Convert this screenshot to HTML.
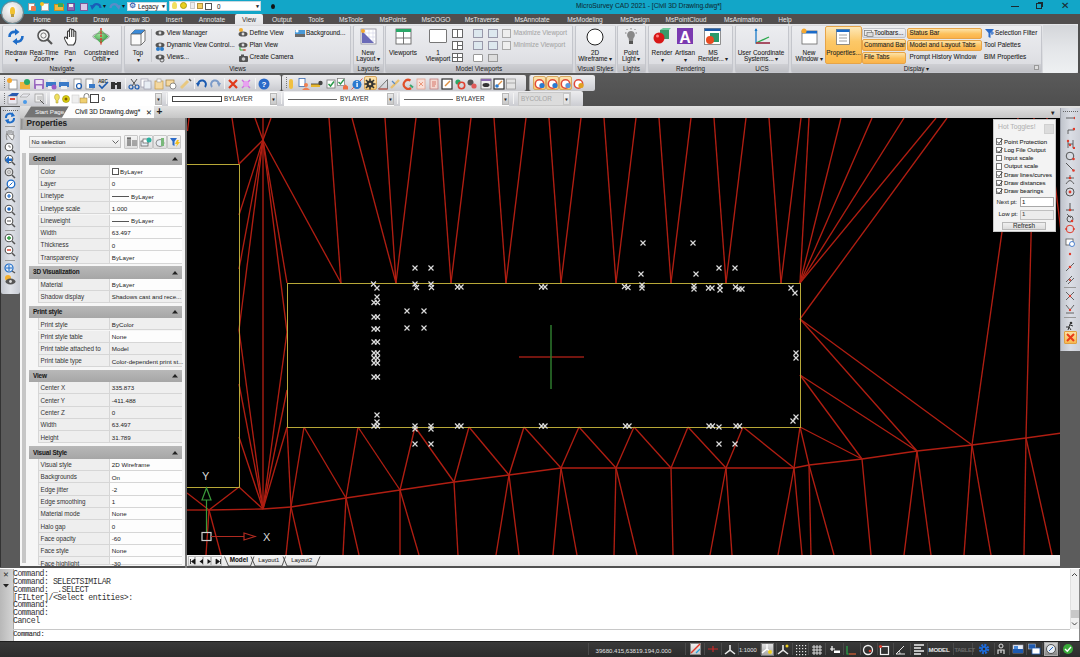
<!DOCTYPE html>
<html><head><meta charset="utf-8">
<style>
*{margin:0;padding:0;box-sizing:border-box}
html,body{width:1080px;height:657px;overflow:hidden;background:#555;font-family:"Liberation Sans",sans-serif;color:#222}
.a{position:absolute}
.t{position:absolute;white-space:nowrap;line-height:1;-webkit-text-stroke:0.07px currentColor}
#title{left:0;top:0;width:1080px;height:14px;background:#12a6c8}
#menubar{left:0;top:14px;width:1080px;height:10px;background:#514e4e}
#ribbon{left:0;top:24px;width:1080px;height:49px;background:linear-gradient(#e4e5e8,#d6d7db)}
#darkband{left:0;top:73px;width:1080px;height:34px;background:linear-gradient(#5a5a5a,#4e4e4e)}
#tabrow{left:0;top:106px;width:1080px;height:12px;background:linear-gradient(#e2e2e2,#c6c6c6)}
#leftbar{left:0;top:106px;width:20px;height:462px;background:#5a5a5a}
#props{left:20px;top:118px;width:166px;height:448px;background:#efefef}
#draw{left:187px;top:118px;width:873px;height:437px;background:#000}
#layouttabs{left:187px;top:555px;width:873px;height:12px;background:#e8e8e8}
#rightbar{left:1060px;top:108px;width:20px;height:460px;background:#5c5c5c}
#cmd{left:0;top:568px;width:1080px;height:73px;background:#fff}
#status{left:0;top:641px;width:1080px;height:16px;background:#3b3b3b}
.mi{position:absolute;top:17.3px;font-size:6.6px;color:#e6e6e6;transform:translateX(-50%);white-space:nowrap;line-height:1}
.grp{position:absolute;top:25px;height:48px;border-radius:2px;background:linear-gradient(#ecedf0 0%,#e2e3e7 60%,#d9dade 100%);border:1px solid #c4c6cc;border-top-color:#d8d9dc}
.gl{position:absolute;left:0;right:0;bottom:0;height:8px;background:linear-gradient(#cfd0d4,#bfc0c5);font-size:6.3px;text-align:center;line-height:9.6px;color:#1a1a1a}
.rl{position:absolute;font-size:6.4px;color:#222;white-space:nowrap;line-height:1;transform:translateX(-50%);text-align:center}
.sl{position:absolute;font-size:6.4px;color:#222;white-space:nowrap;line-height:1}
.dis{color:#a8a8a8}
.ob{position:absolute;background:linear-gradient(#fde3a8,#fcc05a 55%,#fbb24a);border:1px solid #e6a448;border-radius:2px}
</style></head><body>
<div id="title" class="a"></div>
<div id="menubar" class="a"></div>
<!-- app button -->
<div class="a" style="left:2px;top:2px;width:21px;height:21px;border-radius:50%;background:radial-gradient(circle at 45% 35%,#ffffff,#d8d8d8 60%,#9a9a9a);box-shadow:0 0 0 1px #6d8a94"></div>
<div class="a" style="left:10px;top:7px;width:5px;height:8px;border-radius:50% 50% 40% 40%;background:#f2c230"></div>
<div class="a" style="left:11px;top:14px;width:3px;height:3px;background:#b89a40"></div>
<!-- QAT icons -->
<div class="a" style="left:28px;top:3px;width:7px;height:8px;background:#fafafa;border:1px solid #999"></div>
<div class="a" style="left:31px;top:6px;width:5px;height:5px;background:#e8764a;border-radius:1px"></div>
<div class="a" style="left:41px;top:3px;width:8px;height:8px;background:#fafafa;border:1px solid #aaa"></div>
<div class="a" style="left:40px;top:2px;width:4px;height:4px;background:#f4c020;border-radius:50%"></div>
<div class="a" style="left:54px;top:4px;width:10px;height:7px;background:#f0b840;border:1px solid #c89020"></div>
<div class="a" style="left:58px;top:3px;width:5px;height:4px;background:#3aaa5a"></div>
<div class="a" style="left:67px;top:3px;width:8px;height:8px;background:#8c6cb4;border:1px solid #6a4a94"></div>
<div class="a" style="left:69px;top:4px;width:4px;height:3px;background:#eee"></div>
<div class="a" style="left:80px;top:3px;width:8px;height:8px;background:#d8c8e8;border:1px solid #7a5a9a"></div>
<svg class="a" style="left:90px;top:2px" width="12" height="10" viewBox="0 0 12 10"><path d="M3 5 C4 1 10 1 10.5 6" stroke="#1a5cb8" stroke-width="2.2" fill="none"/><path d="M0 3 L5.5 3.5 L2 8Z" fill="#1a5cb8"/></svg>
<div class="t" style="left:103px;top:3px;font-size:6px;color:#111">&#x25BE;</div>
<svg class="a" style="left:109px;top:2px" width="12" height="10" viewBox="0 0 12 10"><path d="M9 5 C8 1 2 1 1.5 6" stroke="#5a8cc8" stroke-width="2.2" fill="none"/><path d="M12 3 L6.5 3.5 L10 8Z" fill="#5a8cc8"/></svg>
<div class="t" style="left:122px;top:3px;font-size:6px;color:#111">&#x25BE;</div>
<div class="a" style="left:127px;top:2px;width:40px;height:9px;background:#fff;border:1px solid #c8d8e0"></div>
<div class="t" style="left:129px;top:2px;font-size:8px;color:#1a4ea8">&#x2699;</div>
<div class="t" style="left:138px;top:3.5px;font-size:6.3px;color:#222">Legacy</div>
<div class="t" style="left:161px;top:4px;font-size:5px;color:#222">&#x25BC;</div>
<div class="a" style="left:169px;top:1px;width:92px;height:10px;background:#fff;border:1px solid #c8d8e0"></div>
<div class="a" style="left:172px;top:2px;width:5px;height:7px;border-radius:50% 50% 30% 30%;background:#f2e060"></div>
<div class="a" style="left:180px;top:2px;width:7px;height:7px;border-radius:50%;background:#e8d020;border:1px solid #b0a010"></div>
<div class="a" style="left:190px;top:2px;width:5px;height:7px;background:#eee;border:1px solid #ccc"></div>
<div class="a" style="left:197px;top:3px;width:6px;height:6px;background:#f4d060;border:1px solid #b09040"></div>
<div class="a" style="left:205px;top:3px;width:7px;height:7px;border:1px solid #555;background:#fff"></div>
<div class="t" style="left:217px;top:3.5px;font-size:6.3px;color:#333">0</div>
<div class="t" style="left:255px;top:4px;font-size:5px;color:#222">&#x25BC;</div>
<div class="a" style="left:271px;top:4px;width:4px;height:5px;border-radius:50%;background:#111"></div>
<div class="t" style="left:576px;top:3px;font-size:6.7px;color:#10303a">MicroSurvey CAD 2021 - [Civil 3D Drawing.dwg*]</div>
<div class="a" style="left:1011px;top:6px;width:8px;height:1px;background:#1a2a30"></div>
<div class="a" style="left:1036px;top:3px;width:6px;height:6px;border:1px solid #1a2a30"></div>
<div class="a" style="left:1038px;top:2px;width:5px;height:5px;border-top:1px solid #1a2a30;border-right:1px solid #1a2a30"></div>
<div class="t" style="left:1061px;top:1px;font-size:10px;color:#1a2a30">&#x2715;</div>

<div class="a" style="left:235px;top:14px;width:28px;height:11px;background:linear-gradient(#f2f2f2,#e4e5e8);border-radius:2px 2px 0 0"></div>
<div class="mi" style="left:42px">Home</div>
<div class="mi" style="left:72px">Edit</div>
<div class="mi" style="left:101px">Draw</div>
<div class="mi" style="left:137px">Draw 3D</div>
<div class="mi" style="left:174px">Insert</div>
<div class="mi" style="left:212px">Annotate</div>
<div class="mi" style="left:249px;color:#333">View</div>
<div class="mi" style="left:282px">Output</div>
<div class="mi" style="left:316px">Tools</div>
<div class="mi" style="left:351px">MsTools</div>
<div class="mi" style="left:393px">MsPoints</div>
<div class="mi" style="left:436px">MsCOGO</div>
<div class="mi" style="left:482px">MsTraverse</div>
<div class="mi" style="left:532px">MsAnnotate</div>
<div class="mi" style="left:585px">MsModeling</div>
<div class="mi" style="left:635px">MsDesign</div>
<div class="mi" style="left:686px">MsPointCloud</div>
<div class="mi" style="left:743px">MsAnimation</div>
<div class="mi" style="left:785px">Help</div>

<div id="ribbon" class="a"></div>
<div class="grp" style="left:2px;width:120px"><div class="gl">Navigate</div></div>
<div class="grp" style="left:124px;width:227px"><div class="gl">Views</div></div>
<div class="grp" style="left:353px;width:31px"><div class="gl">Layouts</div></div>
<div class="grp" style="left:385px;width:188px"><div class="gl">Model Viewports</div></div>
<div class="grp" style="left:575px;width:41px"><div class="gl">Visual Styles</div></div>
<div class="grp" style="left:617px;width:29px"><div class="gl">Lights</div></div>
<div class="grp" style="left:648px;width:85px"><div class="gl">Rendering</div></div>
<div class="grp" style="left:735px;width:54px"><div class="gl">UCS</div></div>
<div class="grp" style="left:791px;width:251px"><div class="gl">Display &#x25BE;</div></div>
<div class="a" style="left:1043px;top:25px;width:35px;height:48px;background:linear-gradient(#d4d6da,#e4e6e9 50%,#eef0f2);border-radius:0 3px 3px 0;"></div>
<div class="a" style="left:1078px;top:24px;width:2px;height:49px;background:#505050;"></div>
<svg class="a" style="left:7px;top:28px" width="18" height="18" viewBox="0 0 18 18"><path d="M2.5 9 C2.5 5 5 3.5 9 4" stroke="#1e6cc8" stroke-width="2.6" fill="none"/><path d="M8 0.5 L12.5 4 L8 7.5Z" fill="#1e6cc8"/><path d="M15.5 8 C15.5 12 13 14 9 13.5" stroke="#1e6cc8" stroke-width="2.6" fill="none"/><path d="M10 10 L5.5 13.5 L10 17Z" fill="#1e6cc8"/></svg>
<div class="t" style="left:16px;top:49.68px;font-size:6.4px;transform:translateX(-50%);">Redraw</div>
<div class="t" style="left:16px;top:56.72px;font-size:6px;transform:translateX(-50%);">&#x25BE;</div>
<svg class="a" style="left:36px;top:28px" width="18" height="18" viewBox="0 0 18 18"><circle cx="7.5" cy="7.5" r="5.5" stroke="#555" stroke-width="1.6" fill="#f4f4f4"/><circle cx="7.5" cy="7.5" r="2.6" stroke="#777" stroke-width="1" fill="none"/><path d="M11.5 11.5 L16 16" stroke="#555" stroke-width="2.2"/></svg>
<div class="t" style="left:44px;top:49.68px;font-size:6.4px;transform:translateX(-50%);">Real-Time</div>
<div class="t" style="left:44px;top:56.38px;font-size:6.4px;transform:translateX(-50%);">Zoom&#x2009;&#x25BE;</div>
<svg class="a" style="left:63px;top:27.5px" width="15" height="18" viewBox="0 0 15 18"><path d="M5 17 C3 14 1 11 1.5 9.5 C2 8.5 3.5 9 4.5 11 L4.5 4 C4.5 2.5 6.5 2.5 6.5 4 L6.5 9 L6.5 1.8 C6.5 0.3 8.7 0.3 8.7 1.8 L8.7 9 L8.7 2.5 C8.7 1 10.8 1 10.8 2.5 L10.8 9 L10.8 4 C10.8 2.6 12.8 2.6 12.8 4 L12.8 11.5 C12.8 14.5 11.5 16 10.5 17Z" stroke="#3a3a3a" stroke-width="1.1" fill="#fff"/></svg>
<div class="t" style="left:70px;top:49.68px;font-size:6.4px;transform:translateX(-50%);">Pan</div>
<div class="t" style="left:70px;top:56.72px;font-size:6px;transform:translateX(-50%);">&#x25BE;</div>
<svg class="a" style="left:92px;top:27px" width="18" height="19" viewBox="0 0 18 19"><defs><radialGradient id="og" cx="0.4" cy="0.35" r="0.7"><stop offset="0" stop-color="#9ee09a"/><stop offset="1" stop-color="#2a9a3a"/></radialGradient></defs><path d="M9 2.5 L16.5 9.5 L9 16.5 L1.5 9.5Z" fill="url(#og)"/><ellipse cx="9" cy="9.5" rx="8.2" ry="3.2" stroke="#777" stroke-width="0.6" fill="none"/><path d="M9 1 V18" stroke="#e03a2a" stroke-width="1.5" stroke-dasharray="2.5 0.8"/></svg>
<div class="t" style="left:101px;top:49.68px;font-size:6.4px;transform:translateX(-50%);">Constrained</div>
<div class="t" style="left:101px;top:56.38px;font-size:6.4px;transform:translateX(-50%);">Orbit&#x2009;&#x25BE;</div>
<svg class="a" style="left:129px;top:29px" width="18" height="17" viewBox="0 0 18 17"><path d="M2 5 L6 1 H16 V12 L12 16 H2Z" fill="#fafafa" stroke="#555" stroke-width="0.8"/><path d="M2 5 L6 1 H16 L12 5Z" fill="#3a8ad8"/><path d="M2 5 H12 V16 M12 5 L16 1" stroke="#555" stroke-width="0.8" fill="none"/></svg>
<div class="t" style="left:138px;top:49.68px;font-size:6.4px;transform:translateX(-50%);">Top</div>
<div class="t" style="left:138px;top:56.72px;font-size:6px;transform:translateX(-50%);">&#x25BE;</div>
<div class="a" style="left:151px;top:29px;width:1px;height:33px;background:#c8c9cd;"></div>
<svg class="a" style="left:155px;top:29px" width="10" height="9" viewBox="0 0 10 9"><ellipse cx="5" cy="4" rx="4.5" ry="2.6" fill="#555"/><circle cx="5" cy="4" r="1.4" fill="#ddd"/></svg>
<div class="t" style="left:166.7px;top:29.68px;font-size:6.4px;">View Manager</div>
<svg class="a" style="left:155px;top:41px" width="10" height="10" viewBox="0 0 10 10"><ellipse cx="5" cy="4" rx="4.5" ry="2.6" fill="#555"/><circle cx="5" cy="4" r="1.4" fill="#ddd"/><circle cx="3" cy="8" r="2" fill="#2a7ac8"/><circle cx="7" cy="8" r="2" fill="#2a7ac8"/></svg>
<div class="t" style="left:166.7px;top:41.68px;font-size:6.4px;">Dynamic View Control...</div>
<svg class="a" style="left:155px;top:53px" width="10" height="10" viewBox="0 0 10 10"><ellipse cx="5" cy="4" rx="4.5" ry="2.6" fill="#555"/><circle cx="5" cy="4" r="1.4" fill="#ddd"/><circle cx="7" cy="7" r="2" stroke="#444" fill="none" stroke-width="0.8"/></svg>
<div class="t" style="left:166.7px;top:54.18px;font-size:6.4px;">Views...</div>
<svg class="a" style="left:238px;top:28px" width="10" height="10" viewBox="0 0 10 10"><circle cx="3" cy="2" r="2" fill="#f4b030"/><ellipse cx="5" cy="6" rx="4.5" ry="2.6" fill="#555"/><circle cx="5" cy="6" r="1.4" fill="#ddd"/></svg>
<div class="t" style="left:249.6px;top:29.68px;font-size:6.4px;">Define View</div>
<svg class="a" style="left:238px;top:41px" width="10" height="10" viewBox="0 0 10 10"><ellipse cx="5" cy="4" rx="4.5" ry="2.6" fill="#555"/><circle cx="5" cy="4" r="1.4" fill="#ddd"/><path d="M2 6 V9 H7" stroke="#3a3" fill="none"/><path d="M5 9 H8" stroke="#e33"/></svg>
<div class="t" style="left:249.6px;top:41.68px;font-size:6.4px;">Plan View</div>
<svg class="a" style="left:238px;top:53px" width="11" height="10" viewBox="0 0 11 10"><rect x="1" y="3" width="9" height="6" rx="1" fill="#555"/><rect x="3" y="1.5" width="3" height="2" fill="#555"/><circle cx="5.5" cy="6" r="1.8" fill="#ccc"/></svg>
<div class="t" style="left:249.6px;top:54.18px;font-size:6.4px;">Create Camera</div>
<svg class="a" style="left:294px;top:28px" width="12" height="10" viewBox="0 0 12 10"><rect x="1" y="2" width="10" height="7" fill="#4a9ad8"/><rect x="1" y="6" width="10" height="3" fill="#6a6a6a"/><circle cx="3" cy="3" r="1.6" fill="#fff"/></svg>
<div class="t" style="left:306px;top:29.68px;font-size:6.4px;">Background...</div>
<svg class="a" style="left:360px;top:28px" width="17" height="17" viewBox="0 0 17 17"><rect x="1" y="1" width="15" height="15" fill="#fff" stroke="#8a8a9a" stroke-width="0.8"/><path d="M1 5 H16 M1 9 H16 M1 13 H16 M5 1 V16 M9 1 V16 M13 1 V16" stroke="#c8c8e0" stroke-width="0.5"/><path d="M2 3 V15 H14Z" fill="#6a6ab8"/><circle cx="3" cy="3" r="2" fill="#f4a830"/></svg>
<div class="t" style="left:368px;top:49.68px;font-size:6.4px;transform:translateX(-50%);">New</div>
<div class="t" style="left:368px;top:56.38px;font-size:6.4px;transform:translateX(-50%);">Layout&#x2009;&#x25BE;</div>
<svg class="a" style="left:395px;top:28px" width="17" height="17" viewBox="0 0 17 17"><rect x="1" y="1" width="15" height="15" fill="#fff" stroke="#666" stroke-width="0.9"/><rect x="1" y="1" width="15" height="3" fill="#2aa868"/><path d="M8.5 4 V16 M1 10 H16" stroke="#666" stroke-width="0.9"/></svg>
<div class="t" style="left:403px;top:49.68px;font-size:6.4px;transform:translateX(-50%);">Viewports</div>
<div class="a" style="left:429px;top:29px;width:18px;height:14px;background:#fff;border:1px solid #777;border-radius:1px;"></div>
<div class="t" style="left:438px;top:49.68px;font-size:6.4px;transform:translateX(-50%);">1</div>
<div class="t" style="left:438px;top:56.38px;font-size:6.4px;transform:translateX(-50%);">Viewport</div>
<div class="a" style="left:452px;top:29px;width:11px;height:9px;background:#fff;border:1px solid #666;"></div>
<div class="a" style="left:452px;top:41px;width:11px;height:9px;background:#fff;border:1px solid #666;"></div>
<div class="a" style="left:452px;top:53px;width:11px;height:9px;background:#fff;border:1px solid #666;"></div>
<svg class="a" style="left:452px;top:29px" width="11" height="9" viewBox="0 0 11 9"><path d="M5.5 0 V9" stroke="#666"/></svg>
<svg class="a" style="left:452px;top:41px" width="11" height="9" viewBox="0 0 11 9"><path d="M5.5 0 V9 M5.5 4.5 H11" stroke="#666"/></svg>
<svg class="a" style="left:452px;top:53px" width="11" height="9" viewBox="0 0 11 9"><path d="M5.5 0 V9 M0 4.5 H11" stroke="#666"/></svg>
<div class="a" style="left:473px;top:29px;width:10px;height:9px;background:#dde8ee;border:1px solid #99a;"></div>
<div class="a" style="left:488px;top:29px;width:10px;height:9px;background:#dde8ee;border:1px solid #99a;"></div>
<div class="a" style="left:473px;top:41px;width:10px;height:9px;background:#dde8ee;border:1px solid #99a;"></div>
<div class="a" style="left:488px;top:41px;width:10px;height:9px;background:#dde8ee;border:1px solid #99a;"></div>
<div class="a" style="left:473px;top:54px;width:10px;height:8px;background:#fff;border:1px solid #999;border-radius:1px;"></div>
<div class="a" style="left:488px;top:54px;width:10px;height:8px;background:#ddd;border:1px solid #999;"></div>
<div class="a" style="left:502px;top:29px;width:9px;height:9px;background:#eee;border:1px solid #aaa;"></div>
<div class="a" style="left:502px;top:41px;width:9px;height:9px;background:#eee;border:1px solid #aaa;"></div>
<div class="t" style="left:513.5px;top:29.68px;font-size:6.4px;color:#a6a6a6;">Maximize Viewport</div>
<div class="t" style="left:513.5px;top:41.68px;font-size:6.4px;color:#a6a6a6;">Minimize Viewport</div>
<svg class="a" style="left:586px;top:28px" width="18" height="18" viewBox="0 0 18 18"><circle cx="9" cy="9" r="8" fill="#fff" stroke="#222" stroke-width="1"/></svg>
<div class="t" style="left:595px;top:49.68px;font-size:6.4px;transform:translateX(-50%);">2D</div>
<div class="t" style="left:595px;top:56.38px;font-size:6.4px;transform:translateX(-50%);">Wireframe&#x2009;&#x25BE;</div>
<svg class="a" style="left:625px;top:28px" width="12" height="17" viewBox="0 0 12 17"><path d="M6 3 C2 3 1 8 3.5 10 L4 13 H8 L8.5 10 C11 8 10 3 6 3Z" fill="#888"/><rect x="4" y="13" width="4" height="3" fill="#555"/><path d="M6 0 V1.5 M0 5 H1.5 M10.5 5 H12 M1.5 1 L2.5 2 M10.5 1 L9.5 2" stroke="#666" stroke-width="0.8"/></svg>
<div class="t" style="left:631px;top:49.68px;font-size:6.4px;transform:translateX(-50%);">Point</div>
<div class="t" style="left:631px;top:56.38px;font-size:6.4px;transform:translateX(-50%);">Light&#x2009;&#x25BE;</div>
<svg class="a" style="left:653px;top:28px" width="19" height="17" viewBox="0 0 19 17"><rect x="7" y="2" width="9" height="9" fill="#3a9a6a"/><path d="M7 2 L10 0 H18 L16 2Z" fill="#6ac89a"/><circle cx="6" cy="10" r="5.5" fill="#d81818"/><circle cx="4.5" cy="8" r="1.5" fill="#ff8080"/></svg>
<div class="t" style="left:662px;top:49.68px;font-size:6.4px;transform:translateX(-50%);">Render</div>
<div class="t" style="left:662px;top:56.72px;font-size:6px;transform:translateX(-50%);">&#x25BE;</div>
<svg class="a" style="left:677px;top:28px" width="16" height="16" viewBox="0 0 16 16"><rect x="0" y="0" width="16" height="16" fill="#7a3ab0"/><text x="8" y="14.5" text-anchor="middle" font-family="Liberation Sans" font-weight="bold" font-size="16" fill="#fff">A</text></svg>
<div class="t" style="left:685px;top:49.68px;font-size:6.4px;transform:translateX(-50%);">Artisan</div>
<div class="t" style="left:685px;top:56.72px;font-size:6px;transform:translateX(-50%);">&#x25BE;</div>
<svg class="a" style="left:704px;top:28px" width="17" height="17" viewBox="0 0 17 17"><rect x="0.5" y="0.5" width="16" height="16" fill="#fff" stroke="#777" stroke-width="0.8"/><rect x="0.5" y="0.5" width="16" height="2.5" fill="#1a5aa8"/><rect x="6" y="5" width="9" height="9" fill="#2a9a6a"/><circle cx="6" cy="12" r="4" fill="#e84a20"/></svg>
<div class="t" style="left:713px;top:49.68px;font-size:6.4px;transform:translateX(-50%);">MS</div>
<div class="t" style="left:713px;top:56.38px;font-size:6.4px;transform:translateX(-50%);">Render...&#x2009;&#x25BE;</div>
<svg class="a" style="left:752px;top:28px" width="20" height="17" viewBox="0 0 20 17"><path d="M4 1 V15 H18" stroke="#1a7ac8" stroke-width="1.3" fill="none"/><path d="M4 15 L17 9" stroke="#2aa84a" stroke-width="1.3"/><path d="M4 15 H18" stroke="#d82a2a" stroke-width="1.3"/><path d="M2.5 3 L4 0 L5.5 3Z" fill="#1a7ac8"/></svg>
<div class="t" style="left:761px;top:49.68px;font-size:6.4px;transform:translateX(-50%);">User Coordinate</div>
<div class="t" style="left:761px;top:56.38px;font-size:6.4px;transform:translateX(-50%);">Systems...&#x2009;&#x25BE;</div>
<svg class="a" style="left:801px;top:28px" width="17" height="17" viewBox="0 0 17 17"><rect x="1" y="3" width="15" height="13" fill="#fff" stroke="#666" stroke-width="0.8"/><rect x="1" y="3" width="15" height="2.5" fill="#1a6ac8"/><circle cx="3" cy="3" r="2.5" fill="#f4a830"/></svg>
<div class="t" style="left:809px;top:49.68px;font-size:6.4px;transform:translateX(-50%);">New</div>
<div class="t" style="left:809px;top:56.38px;font-size:6.4px;transform:translateX(-50%);">Window&#x2009;&#x25BE;</div>
<div class="ob" style="left:825px;top:26px;width:37px;height:38px;background:linear-gradient(#fde8b8,#fcc868 40%,#fbb848 100%)"></div>
<svg class="a" style="left:836px;top:29px" width="14" height="16" viewBox="0 0 14 16"><rect x="0.5" y="0.5" width="13" height="15" fill="#fff" stroke="#777" stroke-width="0.8"/><rect x="0.5" y="0.5" width="13" height="2.5" fill="#1a6ac8"/><path d="M3 6 H11 M3 9 H11 M3 12 H11" stroke="#888" stroke-width="0.8"/></svg>
<div class="t" style="left:843.5px;top:49.68px;font-size:6.4px;transform:translateX(-50%);">Properties...</div>
<div class="a" style="left:862px;top:28px;width:44px;height:10px;background:linear-gradient(#f2f2f4,#dcdde2);border:1px solid #c0c2c8;border-radius:2px;"></div>
<svg class="a" style="left:864px;top:29px" width="10" height="9" viewBox="0 0 10 9"><rect x="0.5" y="1.5" width="7" height="5" fill="#eee" stroke="#777" stroke-width="0.7"/><rect x="3" y="3.5" width="6" height="4" fill="#ddd" stroke="#777" stroke-width="0.7"/></svg>
<div class="t" style="left:874px;top:29.98px;font-size:6.4px;">Toolbars...</div>
<div class="ob" style="left:862px;top:39px;width:44px;height:12px"></div>
<div class="t" style="left:864px;top:41.98px;font-size:6.4px;">Command Bar</div>
<div class="ob" style="left:862px;top:51.5px;width:44px;height:12px"></div>
<div class="t" style="left:864px;top:54.38px;font-size:6.4px;">File Tabs</div>
<div class="ob" style="left:907px;top:27.5px;width:75px;height:11px"></div>
<div class="t" style="left:909.5px;top:29.98px;font-size:6.4px;">Status Bar</div>
<div class="ob" style="left:907px;top:39.5px;width:75px;height:11.5px"></div>
<div class="t" style="left:909.5px;top:41.98px;font-size:6.4px;">Model and Layout Tabs</div>
<div class="t" style="left:909.5px;top:54.38px;font-size:6.4px;">Prompt History Window</div>
<svg class="a" style="left:985px;top:28px" width="10" height="10" viewBox="0 0 10 10"><path d="M0 1 H9 L5.5 5 V10 L3.5 9 V5Z" fill="#2a6ac8"/><path d="M6 5 H9 M7 3 V7" stroke="#2a6ac8"/></svg>
<div class="t" style="left:995px;top:29.98px;font-size:6.4px;">Selection Filter</div>
<div class="t" style="left:984px;top:41.98px;font-size:6.4px;">Tool Palettes</div>
<div class="t" style="left:984px;top:54.38px;font-size:6.4px;">BIM Properties</div>
<div class="a" style="left:1034px;top:65px;width:5px;height:5px;border:1px solid #999;background:#ddd;"></div>
<div id="darkband" class="a"></div>
<div class="a" style="left:0px;top:75px;width:281px;height:16px;background:linear-gradient(#ececee,#dcdde1 50%,#c9cacf);border-radius:0 2px 2px 0;"></div>
<div class="a" style="left:282px;top:75px;width:244px;height:16px;background:linear-gradient(#ececee,#dcdde1 50%,#c9cacf);border-radius:2px;"></div>
<div class="a" style="left:529px;top:75px;width:66px;height:16px;background:linear-gradient(#ececee,#dcdde1 50%,#c9cacf);border-radius:2px;border-left:1px solid #aaa;"></div>
<div class="a" style="left:0px;top:91px;width:583px;height:16px;background:linear-gradient(#ececee,#dcdde1 50%,#c9cacf);border-radius:0 2px 2px 0;"></div>
<svg class="a" style="left:4px;top:77px" width="2" height="12" viewBox="0 0 2 12"><rect x="0" y="0" width="1" height="1" fill="#777"/><rect x="0" y="2" width="1" height="1" fill="#777"/><rect x="0" y="4" width="1" height="1" fill="#777"/><rect x="0" y="6" width="1" height="1" fill="#777"/><rect x="0" y="8" width="1" height="1" fill="#777"/><rect x="0" y="10" width="1" height="1" fill="#777"/></svg>
<svg class="a" style="left:4px;top:93px" width="2" height="12" viewBox="0 0 2 12"><rect x="0" y="0" width="1" height="1" fill="#777"/><rect x="0" y="2" width="1" height="1" fill="#777"/><rect x="0" y="4" width="1" height="1" fill="#777"/><rect x="0" y="6" width="1" height="1" fill="#777"/><rect x="0" y="8" width="1" height="1" fill="#777"/><rect x="0" y="10" width="1" height="1" fill="#777"/></svg>
<svg class="a" style="left:286px;top:77px" width="2" height="12" viewBox="0 0 2 12"><rect x="0" y="0" width="1" height="1" fill="#777"/><rect x="0" y="2" width="1" height="1" fill="#777"/><rect x="0" y="4" width="1" height="1" fill="#777"/><rect x="0" y="6" width="1" height="1" fill="#777"/><rect x="0" y="8" width="1" height="1" fill="#777"/><rect x="0" y="10" width="1" height="1" fill="#777"/></svg>
<svg class="a" style="left:533px;top:77px" width="2" height="12" viewBox="0 0 2 12"><rect x="0" y="0" width="1" height="1" fill="#777"/><rect x="0" y="2" width="1" height="1" fill="#777"/><rect x="0" y="4" width="1" height="1" fill="#777"/><rect x="0" y="6" width="1" height="1" fill="#777"/><rect x="0" y="8" width="1" height="1" fill="#777"/><rect x="0" y="10" width="1" height="1" fill="#777"/></svg>
<svg class="a" style="left:6.5px;top:77.5px" width="12" height="12" viewBox="0 0 12 12"><rect x="2" y="2" width="8" height="9" fill="#fff" stroke="#888" stroke-width="0.8"/><circle cx="2.5" cy="2.5" r="2.5" fill="#f4a830"/></svg>
<svg class="a" style="left:19.0px;top:77.5px" width="12" height="12" viewBox="0 0 12 12"><rect x="1" y="4" width="10" height="7" fill="#f0b440"/><circle cx="8" cy="4" r="3" fill="#2aa868"/></svg>
<svg class="a" style="left:32.5px;top:77.5px" width="12" height="12" viewBox="0 0 12 12"><rect x="1" y="1" width="10" height="10" rx="1" fill="#9a6ac0"/><rect x="2.5" y="2" width="7" height="4" fill="#f0e8f4"/><rect x="3" y="7.5" width="6" height="3.5" fill="#e8e0f0"/></svg>
<svg class="a" style="left:45.0px;top:77.5px" width="12" height="12" viewBox="0 0 12 12"><rect x="1" y="4" width="10" height="5" fill="#3a7ac8"/><rect x="3" y="1" width="6" height="3" fill="#eee"/><rect x="3" y="8" width="6" height="3" fill="#eee"/><circle cx="9" cy="9" r="2.5" fill="#9a5ac8"/></svg>
<svg class="a" style="left:58.0px;top:77.5px" width="12" height="12" viewBox="0 0 12 12"><rect x="1" y="4" width="10" height="5" fill="#3a7ac8"/><rect x="3" y="1" width="6" height="3" fill="#eee"/><rect x="3" y="8" width="6" height="3" fill="#eee"/></svg>
<svg class="a" style="left:71.5px;top:77.5px" width="12" height="12" viewBox="0 0 12 12"><rect x="2" y="1" width="7" height="10" fill="#fff" stroke="#888" stroke-width="0.8"/><circle cx="7" cy="8" r="2.5" stroke="#1a5ab0" stroke-width="1.2" fill="none"/></svg>
<svg class="a" style="left:84.0px;top:77.5px" width="12" height="12" viewBox="0 0 12 12"><rect x="2" y="1" width="7" height="10" fill="#fff" stroke="#888" stroke-width="0.8"/><rect x="5" y="6" width="6" height="4" fill="#3a7ac8"/></svg>
<svg class="a" style="left:97.0px;top:77.5px" width="12" height="12" viewBox="0 0 12 12"><text x="6" y="5" font-size="4.5" text-anchor="middle" font-family="Liberation Sans" font-weight="bold" fill="#333">ABC</text><path d="M2 7 L5 10 L11 4" stroke="#1a5ab0" stroke-width="1.6" fill="none"/></svg>
<svg class="a" style="left:110.0px;top:77.5px" width="12" height="12" viewBox="0 0 12 12"><rect x="1" y="4" width="4" height="7" fill="#333"/><rect x="7" y="4" width="4" height="7" fill="#333"/><rect x="4" y="5" width="4" height="2" fill="#333"/></svg>
<svg class="a" style="left:127.5px;top:77.5px" width="12" height="12" viewBox="0 0 12 12"><circle cx="3" cy="9" r="2" stroke="#1a5ab0" stroke-width="1.2" fill="none"/><circle cx="9" cy="9" r="2" stroke="#1a5ab0" stroke-width="1.2" fill="none"/><path d="M3 1 L8 8 M9 1 L4 8" stroke="#555" stroke-width="1"/></svg>
<svg class="a" style="left:140.0px;top:77.5px" width="12" height="12" viewBox="0 0 12 12"><rect x="1" y="1" width="7" height="8" fill="#fff" stroke="#99a" stroke-width="0.7"/><rect x="4" y="3" width="7" height="8" fill="#e8eef4" stroke="#99a" stroke-width="0.7"/></svg>
<svg class="a" style="left:152.5px;top:77.5px" width="12" height="12" viewBox="0 0 12 12"><rect x="2" y="3" width="8" height="8" fill="#f4d8a0" stroke="#c89a40" stroke-width="0.7"/><rect x="4" y="1" width="4" height="3" fill="#fff" stroke="#999" stroke-width="0.6"/></svg>
<svg class="a" style="left:165.0px;top:77.5px" width="12" height="12" viewBox="0 0 12 12"><rect x="1" y="2" width="8" height="6" fill="#f4d8a0" stroke="#a08040" stroke-width="0.7"/><circle cx="8" cy="8" r="3" fill="#fff" stroke="#666" stroke-width="0.7"/></svg>
<svg class="a" style="left:179.5px;top:77.5px" width="12" height="12" viewBox="0 0 12 12"><path d="M1 10 L8 3" stroke="#e8c880" stroke-width="3"/><path d="M9 1 L11 3" stroke="#555" stroke-width="1.4"/></svg>
<svg class="a" style="left:196.0px;top:77.5px" width="12" height="12" viewBox="0 0 12 12"><path d="M2 7 A4 4 0 1 1 9 9" stroke="#1a5ab0" stroke-width="2" fill="none"/><path d="M0 5 L4 5 L2 9Z" fill="#1a5ab0"/></svg>
<svg class="a" style="left:209.0px;top:77.5px" width="12" height="12" viewBox="0 0 12 12"><path d="M10 7 A4 4 0 1 0 3 9" stroke="#7a9ac8" stroke-width="2" fill="none"/><path d="M12 5 L8 5 L10 9Z" fill="#7a9ac8"/></svg>
<svg class="a" style="left:227.0px;top:77.5px" width="12" height="12" viewBox="0 0 12 12"><path d="M2 2 L10 10 M10 2 L2 10" stroke="#e03a1a" stroke-width="2.2"/></svg>
<svg class="a" style="left:240.0px;top:77.5px" width="12" height="12" viewBox="0 0 12 12"><path d="M2 2 L10 10 M10 2 L2 10" stroke="#d070e0" stroke-width="1.4"/><circle cx="6" cy="6" r="3" fill="#e8a0f0"/></svg>
<svg class="a" style="left:257.5px;top:77.5px" width="12" height="12" viewBox="0 0 12 12"><circle cx="6" cy="6" r="5.5" fill="#2a6ac8"/><text x="6" y="9" font-size="8" font-weight="bold" text-anchor="middle" font-family="Liberation Sans" fill="#fff">?</text></svg>
<div class="a" style="left:124.5px;top:78px;width:1px;height:11px;background:#b0b0b4;border-right:1px solid #f4f4f4;"></div>
<div class="a" style="left:194px;top:78px;width:1px;height:11px;background:#b0b0b4;border-right:1px solid #f4f4f4;"></div>
<div class="a" style="left:224px;top:78px;width:1px;height:11px;background:#b0b0b4;border-right:1px solid #f4f4f4;"></div>
<div class="a" style="left:255px;top:78px;width:1px;height:11px;background:#b0b0b4;border-right:1px solid #f4f4f4;"></div>
<div class="a" style="left:364px;top:76px;width:13px;height:14px;background:linear-gradient(#fce4b0,#f8c870);border:1px solid #d8a860;border-radius:2px;"></div>
<svg class="a" style="left:285.4px;top:77.5px" width="12" height="12" viewBox="0 0 12 12"><rect x="4" y="1" width="4" height="10" rx="2" fill="#f0c040"/></svg>
<svg class="a" style="left:298.0px;top:77.5px" width="12" height="12" viewBox="0 0 12 12"><rect x="1" y="0.5" width="6" height="8" fill="#fff" stroke="#3a6ab0" stroke-width="0.8"/><circle cx="8" cy="7" r="2" fill="#f08050"/><path d="M4 12 Q8 7 12 12Z" fill="#f08050"/></svg>
<svg class="a" style="left:311.4px;top:77.5px" width="12" height="12" viewBox="0 0 12 12"><rect x="0" y="6" width="9" height="3" fill="#e8b830"/><path d="M0 6 H9" stroke="#333" stroke-width="0.8"/><circle cx="9.5" cy="5" r="2.2" fill="#444"/></svg>
<svg class="a" style="left:324.5px;top:77.5px" width="12" height="12" viewBox="0 0 12 12"><rect x="2" y="2" width="8" height="8" fill="#fff" stroke="#777" stroke-width="0.8"/><path d="M3.5 6 L5.5 8 L9 3.5" stroke="#2a9a4a" stroke-width="1.5" fill="none"/></svg>
<svg class="a" style="left:337.3px;top:77.5px" width="12" height="12" viewBox="0 0 12 12"><rect x="0.5" y="0.5" width="7" height="7" fill="#fff" stroke="#777" stroke-width="0.7"/><path d="M1.5 4 L3.5 6 L7 1.5" stroke="#2a9a4a" stroke-width="1.3" fill="none"/><path d="M6 11.5 V8.5 L8.5 6.5 L11 8.5 V11.5Z" fill="#f07040"/></svg>
<svg class="a" style="left:351.0px;top:77.5px" width="12" height="12" viewBox="0 0 12 12"><circle cx="6" cy="6.5" r="4.5" fill="#2a7ad0"/><rect x="5.4" y="5" width="1.4" height="4" fill="#fff"/><circle cx="6" cy="3.5" r="0.8" fill="#fff"/><path d="M9 3 L11.5 0.5 M0.5 11.5 L3 9" stroke="#e04030" stroke-width="0.8"/></svg>
<svg class="a" style="left:364.2px;top:77.5px" width="12" height="12" viewBox="0 0 12 12"><circle cx="6" cy="6" r="3.5" fill="#333"/><path d="M6 0.5 V11.5 M0.5 6 H11.5 M2 2 L10 10 M10 2 L2 10" stroke="#333" stroke-width="1.6"/><circle cx="6" cy="6" r="1.3" fill="#f4d090"/></svg>
<svg class="a" style="left:377.0px;top:77.5px" width="12" height="12" viewBox="0 0 12 12"><path d="M1.5 11 L10.5 1.5 V11Z" fill="none" stroke="#777" stroke-width="1"/><path d="M1.5 11 H10.5" stroke="#d04a3a" stroke-width="1"/></svg>
<svg class="a" style="left:389.3px;top:77.5px" width="12" height="12" viewBox="0 0 12 12"><path d="M2 10 L10 2" stroke="#e8c070" stroke-width="2.4"/><path d="M3 3 L6 6" stroke="#5a8ac0" stroke-width="1.2"/></svg>
<svg class="a" style="left:402.0px;top:77.5px" width="12" height="12" viewBox="0 0 12 12"><path d="M8.5 2.5 A4.5 4.5 0 1 0 9 10" stroke="#e0502a" stroke-width="2.2" fill="none"/><path d="M8 7 L11 9.5" stroke="#3aa870" stroke-width="2"/></svg>
<svg class="a" style="left:414.6px;top:77.5px" width="12" height="12" viewBox="0 0 12 12"><rect x="2" y="1" width="8" height="10" fill="#f8e0d8" stroke="#e0a090" stroke-width="0.8"/><path d="M4 4 L8 8 M8 4 L4 8" stroke="#e89070" stroke-width="0.9"/></svg>
<svg class="a" style="left:428.4px;top:77.5px" width="12" height="12" viewBox="0 0 12 12"><rect x="2" y="1" width="8" height="10" fill="#f4d8d0" stroke="#c08080" stroke-width="0.8"/><path d="M4 4 H8 M4 6 H8 M4 8 H7" stroke="#d06050" stroke-width="0.8"/></svg>
<svg class="a" style="left:441.2px;top:77.5px" width="12" height="12" viewBox="0 0 12 12"><rect x="1" y="1" width="10" height="10" fill="#fff" stroke="#333" stroke-width="1.2"/><path d="M4 8 L9 3" stroke="#e09040" stroke-width="1.4"/></svg>
<svg class="a" style="left:454.0px;top:77.5px" width="12" height="12" viewBox="0 0 12 12"><circle cx="4" cy="4" r="2.6" fill="#2aa868"/><circle cx="7.5" cy="7.5" r="3.2" fill="none" stroke="#e04030" stroke-width="1.6"/></svg>
<svg class="a" style="left:466.3px;top:77.5px" width="12" height="12" viewBox="0 0 12 12"><circle cx="4.5" cy="4.5" r="3" fill="#555"/><circle cx="8" cy="8" r="2.6" fill="#e05a5a"/></svg>
<svg class="a" style="left:480.0px;top:77.5px" width="12" height="12" viewBox="0 0 12 12"><rect x="1" y="1" width="10" height="10" fill="#eee" stroke="#666" stroke-width="0.8"/><rect x="1" y="1" width="10" height="2" fill="#8a6ab0"/><ellipse cx="6" cy="7" rx="3.5" ry="2" fill="#333"/></svg>
<svg class="a" style="left:493.0px;top:77.5px" width="12" height="12" viewBox="0 0 12 12"><rect x="1" y="1" width="10" height="10" fill="#fff" stroke="#333" stroke-width="1.2"/><path d="M5 7 L9 3" stroke="#e09040" stroke-width="1.2"/><circle cx="4" cy="8" r="1.8" fill="#2a7ad0"/></svg>
<svg class="a" style="left:505.4px;top:77.5px" width="12" height="12" viewBox="0 0 12 12"><rect x="1.5" y="1" width="9" height="10" fill="#e4e4e4" stroke="#999" stroke-width="0.8"/><path d="M1.5 5 H10.5" stroke="#999" stroke-width="0.8"/></svg>
<div class="a" style="left:533.0px;top:76px;width:13px;height:14px;background:linear-gradient(#fce4b0,#f8c870);border:1px solid #d8a860;border-radius:2px;"></div>
<div class="a" style="left:546.1px;top:76px;width:13px;height:14px;background:linear-gradient(#fce4b0,#f8c870);border:1px solid #d8a860;border-radius:2px;"></div>
<div class="a" style="left:559.2px;top:76px;width:13px;height:14px;background:linear-gradient(#fce4b0,#f8c870);border:1px solid #d8a860;border-radius:2px;"></div>
<svg class="a" style="left:533.5px;top:77.5px" width="12" height="12" viewBox="0 0 12 12"><circle cx="5.5" cy="6" r="4.2" fill="#fff" stroke="#e04a3a" stroke-width="1.5"/><circle cx="8" cy="7.5" r="2.6" fill="#2a7ad0"/></svg>
<svg class="a" style="left:546.6px;top:77.5px" width="12" height="12" viewBox="0 0 12 12"><circle cx="5.5" cy="6" r="4.2" fill="#fff" stroke="#e04a3a" stroke-width="1.5"/><circle cx="8" cy="7.5" r="2.6" fill="#2a7ad0"/></svg>
<svg class="a" style="left:559.7px;top:77.5px" width="12" height="12" viewBox="0 0 12 12"><circle cx="5.5" cy="6" r="4.2" fill="#fff" stroke="#e04a3a" stroke-width="1.5"/><circle cx="8" cy="7.5" r="2.6" fill="#5a9ad8"/></svg>
<svg class="a" style="left:573.2px;top:77.5px" width="12" height="12" viewBox="0 0 12 12"><circle cx="5.5" cy="6" r="4.2" fill="#fff" stroke="#e04a3a" stroke-width="1.5"/><circle cx="8" cy="7.5" r="2.6" fill="#e0a020"/></svg>
<svg class="a" style="left:6.5px;top:92.8px" width="12" height="12" viewBox="0 0 12 12"><rect x="1" y="3" width="9" height="8" fill="#e8e8f0" stroke="#888" stroke-width="0.6"/><path d="M1 3 L5 0 H12 L10 3Z" fill="#2a5ab0"/><rect x="3" y="5" width="5" height="2" fill="#e04a3a"/></svg>
<svg class="a" style="left:19.0px;top:92.8px" width="12" height="12" viewBox="0 0 12 12"><path d="M1 4 L4 1 H11 L8 4Z" fill="#e8e8ee" stroke="#999" stroke-width="0.6"/><circle cx="6" cy="9" r="2" fill="#4a9ae8"/></svg>
<svg class="a" style="left:32.5px;top:92.8px" width="12" height="12" viewBox="0 0 12 12"><rect x="2" y="1" width="8" height="8" fill="#eee" stroke="#888" stroke-width="0.6"/><path d="M4 4 H9 M4 6 H9" stroke="#888" stroke-width="0.6"/><path d="M7 7 L11 11" stroke="#555"/></svg>
<div class="a" style="left:46px;top:93px;width:1px;height:11px;background:#aaa;border-right:1px solid #f4f4f4;"></div>
<div class="a" style="left:50px;top:92px;width:112px;height:14px;background:#fff;"></div>
<div class="a" style="left:155px;top:93px;width:7px;height:12px;background:linear-gradient(#e8e8e8,#c8c8c8);border:1px solid #b8b8b8;"></div>
<div class="t" style="left:156.3px;top:97.69px;font-size:4.5px;color:#222;">&#x25BC;</div>
<svg class="a" style="left:54.0px;top:92.8px" width="6" height="12" viewBox="0 0 6 12"><path d="M3 1 C0 1 0 6 2 7 V10 H4 V7 C6 6 6 1 3 1Z" fill="#f0e060" stroke="#a09020" stroke-width="0.5"/></svg>
<svg class="a" style="left:61.0px;top:93.8px" width="10" height="10" viewBox="0 0 10 10"><circle cx="5" cy="5" r="3.5" fill="#e0d010" stroke="#909000" stroke-width="0.6"/><circle cx="5" cy="5" r="1.5" fill="#806000"/></svg>
<svg class="a" style="left:71.0px;top:93.8px" width="9" height="10" viewBox="0 0 9 10"><rect x="1" y="1" width="7" height="8" fill="#eee" stroke="#ccc" stroke-width="0.6"/></svg>
<svg class="a" style="left:78.5px;top:93.3px" width="11" height="11" viewBox="0 0 11 11"><rect x="1" y="5" width="7" height="5" fill="#f0d070" stroke="#a08040" stroke-width="0.5"/><path d="M5 5 V3 A2.5 2.5 0 0 1 10 3 V5" stroke="#666" fill="none" stroke-width="0.8"/></svg>
<div class="a" style="left:90px;top:94px;width:9px;height:9px;background:#fff;border:1px solid #444;"></div>
<div class="t" style="left:101.5px;top:96.05px;font-size:6.2px;color:#444;">0</div>
<div class="a" style="left:166px;top:93px;width:1px;height:11px;background:#aaa;border-right:1px solid #f4f4f4;"></div>
<div class="a" style="left:168px;top:92px;width:109px;height:14px;background:#fff;"></div>
<div class="a" style="left:270px;top:93px;width:7px;height:12px;background:linear-gradient(#e8e8e8,#c8c8c8);border:1px solid #b8b8b8;"></div>
<div class="t" style="left:271.3px;top:97.69px;font-size:4.5px;color:#222;">&#x25BC;</div>
<div class="a" style="left:172px;top:96px;width:50px;height:6px;border:1px solid #444;background:#fff;"></div>
<div class="t" style="left:224px;top:95.97px;font-size:6.3px;color:#333;">BYLAYER</div>
<div class="a" style="left:284px;top:92px;width:110px;height:14px;background:#fff;"></div>
<div class="a" style="left:387px;top:93px;width:7px;height:12px;background:linear-gradient(#e8e8e8,#c8c8c8);border:1px solid #b8b8b8;"></div>
<div class="t" style="left:388.3px;top:97.69px;font-size:4.5px;color:#222;">&#x25BC;</div>
<div class="a" style="left:288px;top:98.5px;width:49px;height:1px;background:#666;"></div>
<div class="t" style="left:340px;top:95.97px;font-size:6.3px;color:#333;">BYLAYER</div>
<div class="a" style="left:400px;top:92px;width:109px;height:14px;background:#fff;"></div>
<div class="a" style="left:502px;top:93px;width:7px;height:12px;background:linear-gradient(#e8e8e8,#c8c8c8);border:1px solid #b8b8b8;"></div>
<div class="t" style="left:503.3px;top:97.69px;font-size:4.5px;color:#222;">&#x25BC;</div>
<div class="a" style="left:404px;top:98.5px;width:49px;height:1px;background:#666;"></div>
<div class="t" style="left:456px;top:95.97px;font-size:6.3px;color:#333;">BYLAYER</div>
<div class="a" style="left:281px;top:93px;width:1px;height:11px;background:#aaa;border-right:1px solid #f4f4f4;"></div>
<div class="a" style="left:397px;top:93px;width:1px;height:11px;background:#aaa;border-right:1px solid #f4f4f4;"></div>
<div class="a" style="left:513px;top:93px;width:1px;height:11px;background:#aaa;border-right:1px solid #f4f4f4;"></div>
<div class="a" style="left:518px;top:92px;width:53px;height:14px;background:#dcdcdc;border:1px solid #c8c8c8;"></div>
<div class="a" style="left:563px;top:93px;width:7px;height:12px;background:linear-gradient(#f4f4f4,#dcdcdc);border:1px solid #c8c8c8;"></div>
<div class="t" style="left:564.3px;top:97.69px;font-size:4.5px;color:#222;">&#x25BC;</div>
<div class="t" style="left:521px;top:95.97px;font-size:6.3px;color:#a8a8a8;">BYCOLOR</div>
<div id="tabrow" class="a"></div>
<svg class="a" style="left:24px;top:106px" width="46" height="12" viewBox="0 0 46 12"><path d="M0 11.5 L7 0.5 H45 L38 11.5Z" fill="#747474"/></svg>
<svg class="a" style="left:62px;top:106px" width="92" height="12" viewBox="0 0 92 12"><path d="M0 12 L7 0 H92 V12Z" fill="#fdfdfd"/></svg>
<div class="t" style="left:35px;top:109.35px;font-size:6.2px;color:#e8e8e8;">Start Page</div>
<div class="t" style="left:75px;top:109.21px;font-size:6.6px;color:#222;">Civil 3D Drawing.dwg*</div>
<div class="t" style="left:145.5px;top:108.67px;font-size:7px;color:#222;">&#x2715;</div>
<div class="t" style="left:156.5px;top:106.94px;font-size:10px;color:#222;font-weight:bold;">+</div>
<div class="t" style="left:1050px;top:110.84px;font-size:5.5px;color:#222;">&#x25BC;</div>
<div id="leftbar" class="a"></div>
<div class="a" style="left:0px;top:107px;width:1px;height:460px;background:#333;"></div>
<div class="a" style="left:1px;top:107px;width:18.5px;height:186.5px;background:linear-gradient(90deg,#c4c8d0,#dfe2e8 50%,#c8ccd4);border-radius:0 0 2px 2px;"></div>
<svg class="a" style="left:3px;top:110px" width="16" height="2" viewBox="0 0 16 2"><rect x="0" y="0" width="1" height="1" fill="#666"/><rect x="2" y="0" width="1" height="1" fill="#666"/><rect x="4" y="0" width="1" height="1" fill="#666"/><rect x="6" y="0" width="1" height="1" fill="#666"/><rect x="8" y="0" width="1" height="1" fill="#666"/><rect x="10" y="0" width="1" height="1" fill="#666"/><rect x="12" y="0" width="1" height="1" fill="#666"/><rect x="14" y="0" width="1" height="1" fill="#666"/></svg>
<svg class="a" style="left:4px;top:112px" width="12" height="12" viewBox="0 0 12 12"><path d="M2 6 A4 4 0 0 1 9 3" stroke="#1e6cc8" stroke-width="2" fill="none"/><path d="M8 0 L11 4 L7 5Z" fill="#1e6cc8"/><path d="M10 6 A4 4 0 0 1 3 9" stroke="#1e6cc8" stroke-width="2" fill="none"/><path d="M4 12 L1 8 L5 7Z" fill="#1e6cc8"/></svg>
<div class="a" style="left:5px;top:126px;width:10px;height:1px;background:#999;"></div>
<svg class="a" style="left:4px;top:128.5px" width="12" height="12" viewBox="0 0 12 12"><path d="M3 11 C2 8 2 5 3 4 L3 2 M5 4 V1 M7 4 V1 M9 5 V2 M3 5 C5 5 9 5 10 6 C10 9 9 11 8 11Z" stroke="#777" stroke-width="0.9" fill="#f4f4f4"/></svg>
<svg class="a" style="left:4px;top:141.5px" width="12" height="12" viewBox="0 0 12 12"><circle cx="5" cy="5" r="3.8" stroke="#555" stroke-width="1.1" fill="#fff"/><path d="M8 8 L11 11" stroke="#555" stroke-width="1.5"/><path d="M5 3 V5 H7" stroke="#555" stroke-width="0.7" fill="none"/></svg>
<svg class="a" style="left:4px;top:154px" width="12" height="12" viewBox="0 0 12 12"><circle cx="5" cy="5" r="3.8" stroke="#555" stroke-width="1.1" fill="#fff"/><path d="M8 8 L11 11" stroke="#555" stroke-width="1.5"/><path d="M1 6 L5 2 V4.5 H8 V7 H5 V10Z" fill="#1e6cc8"/></svg>
<svg class="a" style="left:4px;top:166.5px" width="12" height="12" viewBox="0 0 12 12"><circle cx="5" cy="5" r="3.8" stroke="#555" stroke-width="1.1" fill="#ddd"/><path d="M8 8 L11 11" stroke="#555" stroke-width="1.5"/><circle cx="5" cy="5" r="1.5" stroke="#888" stroke-width="0.6" fill="none"/></svg>
<svg class="a" style="left:4px;top:179px" width="12" height="12" viewBox="0 0 12 12"><circle cx="7" cy="5" r="3.8" stroke="#1e6cc8" stroke-width="1.3" fill="#fff"/><path d="M4 8 L1 11" stroke="#555" stroke-width="1.5"/><path d="M5.5 6.5 L8.5 3.5" stroke="#1e6cc8" stroke-width="1"/></svg>
<svg class="a" style="left:4px;top:191.3px" width="12" height="12" viewBox="0 0 12 12"><circle cx="5" cy="5" r="3.8" stroke="#555" stroke-width="1.1" fill="#fff"/><path d="M8 8 L11 11" stroke="#555" stroke-width="1.5"/><path d="M3 5 H7 M5 3 V7" stroke="#1e6cc8" stroke-width="1.2"/></svg>
<svg class="a" style="left:4px;top:203.5px" width="12" height="12" viewBox="0 0 12 12"><circle cx="5" cy="5" r="3.8" stroke="#555" stroke-width="1.1" fill="#fff"/><path d="M8 8 L11 11" stroke="#555" stroke-width="1.5"/><circle cx="5" cy="5" r="1.8" fill="#1e6cc8"/></svg>
<svg class="a" style="left:4px;top:215.5px" width="12" height="12" viewBox="0 0 12 12"><circle cx="5" cy="5" r="3.8" stroke="#555" stroke-width="1.1" fill="#fff"/><path d="M8 8 L11 11" stroke="#555" stroke-width="1.5"/><path d="M3 5 H7" stroke="#555" stroke-width="1"/></svg>
<div class="a" style="left:5px;top:229.5px;width:10px;height:1px;background:#999;"></div>
<svg class="a" style="left:4px;top:232.5px" width="12" height="12" viewBox="0 0 12 12"><circle cx="5" cy="5" r="3.8" stroke="#555" stroke-width="1.1" fill="#fff"/><path d="M8 8 L11 11" stroke="#555" stroke-width="1.5"/><path d="M3 5 H7 M5 3 V7" stroke="#2a9a3a" stroke-width="1.3"/></svg>
<svg class="a" style="left:4px;top:245px" width="12" height="12" viewBox="0 0 12 12"><circle cx="5" cy="5" r="3.8" stroke="#555" stroke-width="1.1" fill="#fff"/><path d="M8 8 L11 11" stroke="#555" stroke-width="1.5"/><path d="M3 5 H7" stroke="#d83a2a" stroke-width="1.4"/></svg>
<div class="a" style="left:5px;top:259.5px;width:10px;height:1px;background:#999;"></div>
<svg class="a" style="left:4px;top:262px" width="12" height="12" viewBox="0 0 12 12"><circle cx="5" cy="6" r="4" stroke="#1e6cc8" stroke-width="1.2" fill="#dde8f4"/><path d="M2 6 H8 M5 3 V9" stroke="#1e6cc8" stroke-width="1"/><path d="M8 9 L11 11" stroke="#555" stroke-width="1.4"/></svg>
<svg class="a" style="left:4px;top:274px" width="12" height="12" viewBox="0 0 12 12"><circle cx="4" cy="4" r="3" fill="#f4b030"/><ellipse cx="6.5" cy="7.5" rx="5" ry="3" fill="#555"/><circle cx="6.5" cy="7.5" r="1.4" fill="#ddd"/></svg>
<div id="props" class="a"></div>
<div class="a" style="left:20px;top:118px;width:166px;height:12px;background:linear-gradient(#b4b4b4,#a4a4a4);"></div>
<div class="a" style="left:21px;top:119px;width:3px;height:10px;background:linear-gradient(90deg,#8a8a8a,#b0b0b0);"></div>
<div class="t" style="left:26.5px;top:119.96px;font-size:8.2px;color:#1e1e1e;font-weight:bold;">Properties</div>
<div class="a" style="left:20px;top:129.6px;width:166px;height:436px;background:#f6f6f6;border-radius:0 3px 3px 3px;border-right:1px solid #e0e0e0;"></div>
<div class="a" style="left:185px;top:118px;width:2px;height:449px;background:#6a6a6a;"></div>
<div class="a" style="left:29px;top:136px;width:92px;height:12px;background:linear-gradient(#f8f8f8,#e8e8e8);border:1px solid #c4c4c4;"></div>
<div class="t" style="left:31.5px;top:139.35px;font-size:6.2px;color:#333;">No selection</div>
<svg class="a" style="left:112px;top:140px" width="7" height="5" viewBox="0 0 7 5"><path d="M0.5 0.5 L3.5 3.5 L6.5 0.5" stroke="#555" stroke-width="0.9" fill="none"/></svg>
<div class="a" style="left:124px;top:135px;width:14px;height:13.5px;background:linear-gradient(#f4f4f4,#dedede);border:1px solid #c8c8c8;border-radius:1px;"></div>
<div class="a" style="left:138.5px;top:135px;width:14px;height:13.5px;background:linear-gradient(#f4f4f4,#dedede);border:1px solid #c8c8c8;border-radius:1px;"></div>
<div class="a" style="left:153px;top:135px;width:14px;height:13.5px;background:linear-gradient(#f4f4f4,#dedede);border:1px solid #c8c8c8;border-radius:1px;"></div>
<div class="a" style="left:167px;top:135px;width:14px;height:13.5px;background:linear-gradient(#f4f4f4,#dedede);border:1px solid #c8c8c8;border-radius:1px;"></div>
<svg class="a" style="left:126px;top:137px" width="12" height="10" viewBox="0 0 12 10"><path d="M2 1 V9 M4 1 V9 M1 1 H5" stroke="#333" stroke-width="0.9"/><path d="M6 4 H11 M6 6 H11 M6 8 H11" stroke="#555" stroke-width="0.9"/></svg>
<svg class="a" style="left:140px;top:137px" width="12" height="10" viewBox="0 0 12 10"><rect x="1" y="4" width="7" height="5" fill="#e8eef4" stroke="#555" stroke-width="0.7"/><rect x="3" y="2" width="5" height="4" fill="#fff" stroke="#555" stroke-width="0.7"/><circle cx="9" cy="3" r="2.5" fill="#2ab0a0"/></svg>
<svg class="a" style="left:155px;top:137px" width="12" height="10" viewBox="0 0 12 10"><ellipse cx="5" cy="6" rx="4" ry="3.5" fill="#e8eef4" stroke="#666" stroke-width="0.7"/><rect x="6" y="1" width="3" height="8" fill="#7ab87a"/></svg>
<svg class="a" style="left:169px;top:137px" width="12" height="11" viewBox="0 0 12 11"><path d="M1 1 H8 L5.5 4.5 V9 L3.5 8 V4.5Z" fill="#2a6ac8"/><path d="M8 3 L6 7 H8 L7 10 L11 5 H9 L10 3Z" fill="#f4c020"/></svg>
<div class="a" style="left:21.5px;top:153px;width:4.5px;height:410px;background:#c6c6c6;"></div>
<div class="a" style="left:29px;top:152.9px;width:152.5px;height:12.4px;background:linear-gradient(#b8b8b8,#a6a6a6);"></div>
<div class="t" style="left:33px;top:156.18px;font-size:6.4px;color:#1a1a1a;font-weight:bold;letter-spacing:-0.15px;">General</div>
<svg class="a" style="left:171.5px;top:157.4px" width="6" height="4" viewBox="0 0 6 4"><path d="M0 3.5 L3 0 L6 3.5Z" fill="#222"/></svg>
<div class="a" style="left:37.5px;top:165.3px;width:71.5px;height:12.3px;background:#eeeeee;border-left:1.5px solid #d6d6d6;border-bottom:1.3px solid #d6d6d6;"></div>
<div class="a" style="left:109px;top:165.3px;width:72.5px;height:12.3px;background:#fdfdfd;border-left:1.3px solid #d6d6d6;border-bottom:1.3px solid #d6d6d6;"></div>
<div class="t" style="left:40.6px;top:168.67px;font-size:6.3px;color:#333;-webkit-text-stroke:0;letter-spacing:-0.05px;">Color</div>
<div class="a" style="left:111.5px;top:167.8px;width:7.5px;height:7.5px;background:#fff;border:1px solid #555;"></div>
<div class="t" style="left:120px;top:169.25px;font-size:6.2px;color:#222;-webkit-text-stroke:0;">ByLayer</div>
<div class="a" style="left:37.5px;top:177.60000000000002px;width:71.5px;height:12.3px;background:#eeeeee;border-left:1.5px solid #d6d6d6;border-bottom:1.3px solid #d6d6d6;"></div>
<div class="a" style="left:109px;top:177.60000000000002px;width:72.5px;height:12.3px;background:#fdfdfd;border-left:1.3px solid #d6d6d6;border-bottom:1.3px solid #d6d6d6;"></div>
<div class="t" style="left:40.6px;top:180.97px;font-size:6.3px;color:#333;-webkit-text-stroke:0;letter-spacing:-0.05px;">Layer</div>
<div class="t" style="left:111.8px;top:181.05px;font-size:6.2px;color:#222;-webkit-text-stroke:0;">0</div>
<div class="a" style="left:37.5px;top:189.90000000000003px;width:71.5px;height:12.3px;background:#eeeeee;border-left:1.5px solid #d6d6d6;border-bottom:1.3px solid #d6d6d6;"></div>
<div class="a" style="left:109px;top:189.90000000000003px;width:72.5px;height:12.3px;background:#fdfdfd;border-left:1.3px solid #d6d6d6;border-bottom:1.3px solid #d6d6d6;"></div>
<div class="t" style="left:40.6px;top:193.27px;font-size:6.3px;color:#333;-webkit-text-stroke:0;letter-spacing:-0.05px;">Linetype</div>
<div class="a" style="left:112px;top:195.90000000000003px;width:17px;height:1px;background:#555;"></div>
<div class="t" style="left:131px;top:193.85px;font-size:6.2px;color:#222;-webkit-text-stroke:0;">ByLayer</div>
<div class="a" style="left:37.5px;top:202.20000000000005px;width:71.5px;height:12.3px;background:#eeeeee;border-left:1.5px solid #d6d6d6;border-bottom:1.3px solid #d6d6d6;"></div>
<div class="a" style="left:109px;top:202.20000000000005px;width:72.5px;height:12.3px;background:#fdfdfd;border-left:1.3px solid #d6d6d6;border-bottom:1.3px solid #d6d6d6;"></div>
<div class="t" style="left:40.6px;top:205.57px;font-size:6.3px;color:#333;-webkit-text-stroke:0;letter-spacing:-0.05px;">Linetype scale</div>
<div class="t" style="left:111.8px;top:205.65px;font-size:6.2px;color:#222;-webkit-text-stroke:0;">1.000</div>
<div class="a" style="left:37.5px;top:214.50000000000006px;width:71.5px;height:12.3px;background:#eeeeee;border-left:1.5px solid #d6d6d6;border-bottom:1.3px solid #d6d6d6;"></div>
<div class="a" style="left:109px;top:214.50000000000006px;width:72.5px;height:12.3px;background:#fdfdfd;border-left:1.3px solid #d6d6d6;border-bottom:1.3px solid #d6d6d6;"></div>
<div class="t" style="left:40.6px;top:217.87px;font-size:6.3px;color:#333;-webkit-text-stroke:0;letter-spacing:-0.05px;">Lineweight</div>
<div class="a" style="left:112px;top:220.50000000000006px;width:17px;height:1px;background:#555;"></div>
<div class="t" style="left:131px;top:218.45px;font-size:6.2px;color:#222;-webkit-text-stroke:0;">ByLayer</div>
<div class="a" style="left:37.5px;top:226.80000000000007px;width:71.5px;height:12.3px;background:#eeeeee;border-left:1.5px solid #d6d6d6;border-bottom:1.3px solid #d6d6d6;"></div>
<div class="a" style="left:109px;top:226.80000000000007px;width:72.5px;height:12.3px;background:#fdfdfd;border-left:1.3px solid #d6d6d6;border-bottom:1.3px solid #d6d6d6;"></div>
<div class="t" style="left:40.6px;top:230.17px;font-size:6.3px;color:#333;-webkit-text-stroke:0;letter-spacing:-0.05px;">Width</div>
<div class="t" style="left:111.8px;top:230.25px;font-size:6.2px;color:#222;-webkit-text-stroke:0;">63.497</div>
<div class="a" style="left:37.5px;top:239.10000000000008px;width:71.5px;height:12.3px;background:#eeeeee;border-left:1.5px solid #d6d6d6;border-bottom:1.3px solid #d6d6d6;"></div>
<div class="a" style="left:109px;top:239.10000000000008px;width:72.5px;height:12.3px;background:#fdfdfd;border-left:1.3px solid #d6d6d6;border-bottom:1.3px solid #d6d6d6;"></div>
<div class="t" style="left:40.6px;top:242.47px;font-size:6.3px;color:#333;-webkit-text-stroke:0;letter-spacing:-0.05px;">Thickness</div>
<div class="t" style="left:111.8px;top:242.55px;font-size:6.2px;color:#222;-webkit-text-stroke:0;">0</div>
<div class="a" style="left:37.5px;top:251.4000000000001px;width:71.5px;height:12.3px;background:#eeeeee;border-left:1.5px solid #d6d6d6;border-bottom:1.3px solid #d6d6d6;"></div>
<div class="a" style="left:109px;top:251.4000000000001px;width:72.5px;height:12.3px;background:#fdfdfd;border-left:1.3px solid #d6d6d6;border-bottom:1.3px solid #d6d6d6;"></div>
<div class="t" style="left:40.6px;top:254.77px;font-size:6.3px;color:#333;-webkit-text-stroke:0;letter-spacing:-0.05px;">Transparency</div>
<div class="t" style="left:111.8px;top:254.85px;font-size:6.2px;color:#222;-webkit-text-stroke:0;">ByLayer</div>
<div class="a" style="left:29px;top:266.2px;width:152.5px;height:12.4px;background:linear-gradient(#b8b8b8,#a6a6a6);"></div>
<div class="t" style="left:33px;top:269.48px;font-size:6.4px;color:#1a1a1a;font-weight:bold;letter-spacing:-0.15px;">3D Visualization</div>
<svg class="a" style="left:171.5px;top:270.7px" width="6" height="4" viewBox="0 0 6 4"><path d="M0 3.5 L3 0 L6 3.5Z" fill="#222"/></svg>
<div class="a" style="left:37.5px;top:278.59999999999997px;width:71.5px;height:12.3px;background:#eeeeee;border-left:1.5px solid #d6d6d6;border-bottom:1.3px solid #d6d6d6;"></div>
<div class="a" style="left:109px;top:278.59999999999997px;width:72.5px;height:12.3px;background:#fdfdfd;border-left:1.3px solid #d6d6d6;border-bottom:1.3px solid #d6d6d6;"></div>
<div class="t" style="left:40.6px;top:281.97px;font-size:6.3px;color:#333;-webkit-text-stroke:0;letter-spacing:-0.05px;">Material</div>
<div class="t" style="left:111.8px;top:282.05px;font-size:6.2px;color:#222;-webkit-text-stroke:0;">ByLayer</div>
<div class="a" style="left:37.5px;top:290.9px;width:71.5px;height:12.3px;background:#eeeeee;border-left:1.5px solid #d6d6d6;border-bottom:1.3px solid #d6d6d6;"></div>
<div class="a" style="left:109px;top:290.9px;width:72.5px;height:12.3px;background:#efefef;border-left:1.3px solid #d6d6d6;border-bottom:1.3px solid #d6d6d6;"></div>
<div class="t" style="left:40.6px;top:294.27px;font-size:6.3px;color:#333;-webkit-text-stroke:0;letter-spacing:-0.05px;">Shadow display</div>
<div class="t" style="left:111.8px;top:294.35px;font-size:6.2px;color:#222;-webkit-text-stroke:0;">Shadows cast and rece...</div>
<div class="a" style="left:29px;top:305.8px;width:152.5px;height:12.4px;background:linear-gradient(#b8b8b8,#a6a6a6);"></div>
<div class="t" style="left:33px;top:309.08px;font-size:6.4px;color:#1a1a1a;font-weight:bold;letter-spacing:-0.15px;">Print style</div>
<svg class="a" style="left:171.5px;top:310.3px" width="6" height="4" viewBox="0 0 6 4"><path d="M0 3.5 L3 0 L6 3.5Z" fill="#222"/></svg>
<div class="a" style="left:37.5px;top:318.2px;width:71.5px;height:12.3px;background:#eeeeee;border-left:1.5px solid #d6d6d6;border-bottom:1.3px solid #d6d6d6;"></div>
<div class="a" style="left:109px;top:318.2px;width:72.5px;height:12.3px;background:#efefef;border-left:1.3px solid #d6d6d6;border-bottom:1.3px solid #d6d6d6;"></div>
<div class="t" style="left:40.6px;top:321.57px;font-size:6.3px;color:#333;-webkit-text-stroke:0;letter-spacing:-0.05px;">Print style</div>
<div class="t" style="left:111.8px;top:321.65px;font-size:6.2px;color:#222;-webkit-text-stroke:0;">ByColor</div>
<div class="a" style="left:37.5px;top:330.5px;width:71.5px;height:12.3px;background:#eeeeee;border-left:1.5px solid #d6d6d6;border-bottom:1.3px solid #d6d6d6;"></div>
<div class="a" style="left:109px;top:330.5px;width:72.5px;height:12.3px;background:#fdfdfd;border-left:1.3px solid #d6d6d6;border-bottom:1.3px solid #d6d6d6;"></div>
<div class="t" style="left:40.6px;top:333.87px;font-size:6.3px;color:#333;-webkit-text-stroke:0;letter-spacing:-0.05px;">Print style table</div>
<div class="t" style="left:111.8px;top:333.95px;font-size:6.2px;color:#222;-webkit-text-stroke:0;">None</div>
<div class="a" style="left:37.5px;top:342.8px;width:71.5px;height:12.3px;background:#eeeeee;border-left:1.5px solid #d6d6d6;border-bottom:1.3px solid #d6d6d6;"></div>
<div class="a" style="left:109px;top:342.8px;width:72.5px;height:12.3px;background:#efefef;border-left:1.3px solid #d6d6d6;border-bottom:1.3px solid #d6d6d6;"></div>
<div class="t" style="left:40.6px;top:346.17px;font-size:6.3px;color:#333;-webkit-text-stroke:0;letter-spacing:-0.05px;">Print table attached to</div>
<div class="t" style="left:111.8px;top:346.25px;font-size:6.2px;color:#222;-webkit-text-stroke:0;">Model</div>
<div class="a" style="left:37.5px;top:355.1px;width:71.5px;height:12.3px;background:#eeeeee;border-left:1.5px solid #d6d6d6;border-bottom:1.3px solid #d6d6d6;"></div>
<div class="a" style="left:109px;top:355.1px;width:72.5px;height:12.3px;background:#efefef;border-left:1.3px solid #d6d6d6;border-bottom:1.3px solid #d6d6d6;"></div>
<div class="t" style="left:40.6px;top:358.47px;font-size:6.3px;color:#333;-webkit-text-stroke:0;letter-spacing:-0.05px;">Print table type</div>
<div class="t" style="left:111.8px;top:358.55px;font-size:6.2px;color:#222;-webkit-text-stroke:0;">Color-dependent print st...</div>
<div class="a" style="left:29px;top:369.6px;width:152.5px;height:12.4px;background:linear-gradient(#b8b8b8,#a6a6a6);"></div>
<div class="t" style="left:33px;top:372.88px;font-size:6.4px;color:#1a1a1a;font-weight:bold;letter-spacing:-0.15px;">View</div>
<svg class="a" style="left:171.5px;top:374.1px" width="6" height="4" viewBox="0 0 6 4"><path d="M0 3.5 L3 0 L6 3.5Z" fill="#222"/></svg>
<div class="a" style="left:37.5px;top:382.0px;width:71.5px;height:12.3px;background:#eeeeee;border-left:1.5px solid #d6d6d6;border-bottom:1.3px solid #d6d6d6;"></div>
<div class="a" style="left:109px;top:382.0px;width:72.5px;height:12.3px;background:#efefef;border-left:1.3px solid #d6d6d6;border-bottom:1.3px solid #d6d6d6;"></div>
<div class="t" style="left:40.6px;top:385.37px;font-size:6.3px;color:#333;-webkit-text-stroke:0;letter-spacing:-0.05px;">Center X</div>
<div class="t" style="left:111.8px;top:385.45px;font-size:6.2px;color:#222;-webkit-text-stroke:0;">335.873</div>
<div class="a" style="left:37.5px;top:394.3px;width:71.5px;height:12.3px;background:#eeeeee;border-left:1.5px solid #d6d6d6;border-bottom:1.3px solid #d6d6d6;"></div>
<div class="a" style="left:109px;top:394.3px;width:72.5px;height:12.3px;background:#efefef;border-left:1.3px solid #d6d6d6;border-bottom:1.3px solid #d6d6d6;"></div>
<div class="t" style="left:40.6px;top:397.67px;font-size:6.3px;color:#333;-webkit-text-stroke:0;letter-spacing:-0.05px;">Center Y</div>
<div class="t" style="left:111.8px;top:397.75px;font-size:6.2px;color:#222;-webkit-text-stroke:0;">-411.488</div>
<div class="a" style="left:37.5px;top:406.6px;width:71.5px;height:12.3px;background:#eeeeee;border-left:1.5px solid #d6d6d6;border-bottom:1.3px solid #d6d6d6;"></div>
<div class="a" style="left:109px;top:406.6px;width:72.5px;height:12.3px;background:#efefef;border-left:1.3px solid #d6d6d6;border-bottom:1.3px solid #d6d6d6;"></div>
<div class="t" style="left:40.6px;top:409.97px;font-size:6.3px;color:#333;-webkit-text-stroke:0;letter-spacing:-0.05px;">Center Z</div>
<div class="t" style="left:111.8px;top:410.05px;font-size:6.2px;color:#222;-webkit-text-stroke:0;">0</div>
<div class="a" style="left:37.5px;top:418.90000000000003px;width:71.5px;height:12.3px;background:#eeeeee;border-left:1.5px solid #d6d6d6;border-bottom:1.3px solid #d6d6d6;"></div>
<div class="a" style="left:109px;top:418.90000000000003px;width:72.5px;height:12.3px;background:#efefef;border-left:1.3px solid #d6d6d6;border-bottom:1.3px solid #d6d6d6;"></div>
<div class="t" style="left:40.6px;top:422.27px;font-size:6.3px;color:#333;-webkit-text-stroke:0;letter-spacing:-0.05px;">Width</div>
<div class="t" style="left:111.8px;top:422.35px;font-size:6.2px;color:#222;-webkit-text-stroke:0;">63.497</div>
<div class="a" style="left:37.5px;top:431.20000000000005px;width:71.5px;height:12.3px;background:#eeeeee;border-left:1.5px solid #d6d6d6;border-bottom:1.3px solid #d6d6d6;"></div>
<div class="a" style="left:109px;top:431.20000000000005px;width:72.5px;height:12.3px;background:#efefef;border-left:1.3px solid #d6d6d6;border-bottom:1.3px solid #d6d6d6;"></div>
<div class="t" style="left:40.6px;top:434.57px;font-size:6.3px;color:#333;-webkit-text-stroke:0;letter-spacing:-0.05px;">Height</div>
<div class="t" style="left:111.8px;top:434.65px;font-size:6.2px;color:#222;-webkit-text-stroke:0;">31.789</div>
<div class="a" style="left:29px;top:446.4px;width:152.5px;height:12.4px;background:linear-gradient(#b8b8b8,#a6a6a6);"></div>
<div class="t" style="left:33px;top:449.68px;font-size:6.4px;color:#1a1a1a;font-weight:bold;letter-spacing:-0.15px;">Visual Style</div>
<svg class="a" style="left:171.5px;top:450.9px" width="6" height="4" viewBox="0 0 6 4"><path d="M0 3.5 L3 0 L6 3.5Z" fill="#222"/></svg>
<div class="a" style="left:37.5px;top:458.79999999999995px;width:71.5px;height:12.3px;background:#eeeeee;border-left:1.5px solid #d6d6d6;border-bottom:1.3px solid #d6d6d6;"></div>
<div class="a" style="left:109px;top:458.79999999999995px;width:72.5px;height:12.3px;background:#fdfdfd;border-left:1.3px solid #d6d6d6;border-bottom:1.3px solid #d6d6d6;"></div>
<div class="t" style="left:40.6px;top:462.17px;font-size:6.3px;color:#333;-webkit-text-stroke:0;letter-spacing:-0.05px;">Visual style</div>
<div class="t" style="left:111.8px;top:462.25px;font-size:6.2px;color:#222;-webkit-text-stroke:0;">2D Wireframe</div>
<div class="a" style="left:37.5px;top:471.09999999999997px;width:71.5px;height:12.3px;background:#eeeeee;border-left:1.5px solid #d6d6d6;border-bottom:1.3px solid #d6d6d6;"></div>
<div class="a" style="left:109px;top:471.09999999999997px;width:72.5px;height:12.3px;background:#fdfdfd;border-left:1.3px solid #d6d6d6;border-bottom:1.3px solid #d6d6d6;"></div>
<div class="t" style="left:40.6px;top:474.47px;font-size:6.3px;color:#333;-webkit-text-stroke:0;letter-spacing:-0.05px;">Backgrounds</div>
<div class="t" style="left:111.8px;top:474.55px;font-size:6.2px;color:#222;-webkit-text-stroke:0;">On</div>
<div class="a" style="left:37.5px;top:483.4px;width:71.5px;height:12.3px;background:#eeeeee;border-left:1.5px solid #d6d6d6;border-bottom:1.3px solid #d6d6d6;"></div>
<div class="a" style="left:109px;top:483.4px;width:72.5px;height:12.3px;background:#fdfdfd;border-left:1.3px solid #d6d6d6;border-bottom:1.3px solid #d6d6d6;"></div>
<div class="t" style="left:40.6px;top:486.77px;font-size:6.3px;color:#333;-webkit-text-stroke:0;letter-spacing:-0.05px;">Edge jitter</div>
<div class="t" style="left:111.8px;top:486.85px;font-size:6.2px;color:#222;-webkit-text-stroke:0;">-2</div>
<div class="a" style="left:37.5px;top:495.7px;width:71.5px;height:12.3px;background:#eeeeee;border-left:1.5px solid #d6d6d6;border-bottom:1.3px solid #d6d6d6;"></div>
<div class="a" style="left:109px;top:495.7px;width:72.5px;height:12.3px;background:#fdfdfd;border-left:1.3px solid #d6d6d6;border-bottom:1.3px solid #d6d6d6;"></div>
<div class="t" style="left:40.6px;top:499.07px;font-size:6.3px;color:#333;-webkit-text-stroke:0;letter-spacing:-0.05px;">Edge smoothing</div>
<div class="t" style="left:111.8px;top:499.15px;font-size:6.2px;color:#222;-webkit-text-stroke:0;">1</div>
<div class="a" style="left:37.5px;top:508.0px;width:71.5px;height:12.3px;background:#eeeeee;border-left:1.5px solid #d6d6d6;border-bottom:1.3px solid #d6d6d6;"></div>
<div class="a" style="left:109px;top:508.0px;width:72.5px;height:12.3px;background:#fdfdfd;border-left:1.3px solid #d6d6d6;border-bottom:1.3px solid #d6d6d6;"></div>
<div class="t" style="left:40.6px;top:511.37px;font-size:6.3px;color:#333;-webkit-text-stroke:0;letter-spacing:-0.05px;">Material mode</div>
<div class="t" style="left:111.8px;top:511.45px;font-size:6.2px;color:#222;-webkit-text-stroke:0;">None</div>
<div class="a" style="left:37.5px;top:520.3px;width:71.5px;height:12.3px;background:#eeeeee;border-left:1.5px solid #d6d6d6;border-bottom:1.3px solid #d6d6d6;"></div>
<div class="a" style="left:109px;top:520.3px;width:72.5px;height:12.3px;background:#fdfdfd;border-left:1.3px solid #d6d6d6;border-bottom:1.3px solid #d6d6d6;"></div>
<div class="t" style="left:40.6px;top:523.67px;font-size:6.3px;color:#333;-webkit-text-stroke:0;letter-spacing:-0.05px;">Halo gap</div>
<div class="t" style="left:111.8px;top:523.75px;font-size:6.2px;color:#222;-webkit-text-stroke:0;">0</div>
<div class="a" style="left:37.5px;top:532.5999999999999px;width:71.5px;height:12.3px;background:#eeeeee;border-left:1.5px solid #d6d6d6;border-bottom:1.3px solid #d6d6d6;"></div>
<div class="a" style="left:109px;top:532.5999999999999px;width:72.5px;height:12.3px;background:#fdfdfd;border-left:1.3px solid #d6d6d6;border-bottom:1.3px solid #d6d6d6;"></div>
<div class="t" style="left:40.6px;top:535.97px;font-size:6.3px;color:#333;-webkit-text-stroke:0;letter-spacing:-0.05px;">Face opacity</div>
<div class="t" style="left:111.8px;top:536.05px;font-size:6.2px;color:#222;-webkit-text-stroke:0;">-60</div>
<div class="a" style="left:37.5px;top:544.8999999999999px;width:71.5px;height:12.3px;background:#eeeeee;border-left:1.5px solid #d6d6d6;border-bottom:1.3px solid #d6d6d6;"></div>
<div class="a" style="left:109px;top:544.8999999999999px;width:72.5px;height:12.3px;background:#fdfdfd;border-left:1.3px solid #d6d6d6;border-bottom:1.3px solid #d6d6d6;"></div>
<div class="t" style="left:40.6px;top:548.27px;font-size:6.3px;color:#333;-webkit-text-stroke:0;letter-spacing:-0.05px;">Face style</div>
<div class="t" style="left:111.8px;top:548.35px;font-size:6.2px;color:#222;-webkit-text-stroke:0;">None</div>
<div class="a" style="left:37.5px;top:557.1999999999998px;width:71.5px;height:8.300000000000182px;background:#eeeeee;border-left:1.5px solid #d6d6d6;border-bottom:1.3px solid #d6d6d6;"></div>
<div class="a" style="left:109px;top:557.1999999999998px;width:72.5px;height:8.300000000000182px;background:#fdfdfd;border-left:1.3px solid #d6d6d6;border-bottom:1.3px solid #d6d6d6;"></div>
<div class="t" style="left:40.6px;top:560.57px;font-size:6.3px;color:#333;-webkit-text-stroke:0;letter-spacing:-0.05px;">Face highlight</div>
<div class="t" style="left:111.8px;top:560.65px;font-size:6.2px;color:#222;-webkit-text-stroke:0;">-30</div>
<div class="a" style="left:20px;top:565.5px;width:166px;height:3px;background:#4e4e4e;"></div>
<div id="draw" class="a"></div>
<svg class="a" style="left:187px;top:118px" width="873" height="437" viewBox="187 118 873 437">
<g stroke="#b01e12" stroke-width="1.35" fill="none">
<line x1="232" y1="118" x2="239" y2="164"/>
<line x1="189" y1="118" x2="187.5" y2="131"/>
<line x1="255" y1="118" x2="263" y2="140"/>
<line x1="263" y1="118" x2="263" y2="140"/>
<line x1="271" y1="118" x2="263" y2="140"/>
<line x1="263" y1="140" x2="239" y2="164"/>
<line x1="263" y1="140" x2="239" y2="215"/>
<line x1="263" y1="140" x2="239" y2="269"/>
<line x1="263" y1="140" x2="239" y2="330"/>
<line x1="263" y1="140" x2="287" y2="283"/>
<line x1="263" y1="140" x2="287" y2="332"/>
<line x1="263" y1="140" x2="341" y2="283"/>
<line x1="263" y1="140" x2="263" y2="509"/>
<line x1="329" y1="118" x2="341" y2="283"/>
<line x1="352" y1="118" x2="396" y2="283"/>
<line x1="385" y1="118" x2="396" y2="283"/>
<line x1="416" y1="118" x2="396" y2="283"/>
<line x1="439" y1="118" x2="451" y2="283"/>
<line x1="471" y1="118" x2="451" y2="283"/>
<line x1="494" y1="118" x2="506" y2="283"/>
<line x1="526" y1="118" x2="506" y2="283"/>
<line x1="549" y1="118" x2="561" y2="283"/>
<line x1="581" y1="118" x2="561" y2="283"/>
<line x1="604" y1="118" x2="616" y2="283"/>
<line x1="636" y1="118" x2="616" y2="283"/>
<line x1="659" y1="118" x2="671" y2="283"/>
<line x1="691" y1="118" x2="671" y2="283"/>
<line x1="714" y1="118" x2="726" y2="283"/>
<line x1="746" y1="118" x2="726" y2="283"/>
<line x1="769" y1="118" x2="781" y2="283"/>
<line x1="801" y1="118" x2="781" y2="283"/>
<line x1="809" y1="118" x2="800" y2="283"/>
<line x1="841" y1="118" x2="800" y2="283"/>
<line x1="872" y1="118" x2="800" y2="283"/>
<line x1="904" y1="118" x2="800" y2="283"/>
<line x1="936" y1="118" x2="800" y2="283"/>
<line x1="947" y1="118" x2="800" y2="319"/>
<line x1="1018" y1="118" x2="972" y2="445"/>
<line x1="1034" y1="118" x2="1026" y2="438"/>
<line x1="1047" y1="118" x2="1062" y2="240"/>
<line x1="263" y1="509" x2="239" y2="330"/>
<line x1="263" y1="509" x2="239" y2="384"/>
<line x1="263" y1="509" x2="239" y2="437"/>
<line x1="263" y1="509" x2="239" y2="487"/>
<line x1="263" y1="509" x2="287" y2="332"/>
<line x1="263" y1="509" x2="287" y2="390"/>
<line x1="263" y1="509" x2="287" y2="427"/>
<line x1="187" y1="493" x2="209" y2="510"/>
<line x1="209" y1="510" x2="239" y2="487"/>
<line x1="209" y1="510" x2="206" y2="555"/>
<line x1="209" y1="510" x2="221" y2="555"/>
<line x1="187" y1="510" x2="209" y2="510"/>
<line x1="209" y1="510" x2="263" y2="509"/>
<line x1="263" y1="509" x2="291" y2="507"/>
<line x1="291" y1="507" x2="346" y2="498"/>
<line x1="346" y1="498" x2="400" y2="490"/>
<line x1="400" y1="490" x2="454" y2="482"/>
<line x1="454" y1="482" x2="509" y2="475"/>
<line x1="509" y1="475" x2="561" y2="468"/>
<line x1="561" y1="468" x2="616" y2="468"/>
<line x1="616" y1="468" x2="671" y2="468"/>
<line x1="671" y1="468" x2="726" y2="468"/>
<line x1="726" y1="468" x2="794" y2="468"/>
<line x1="794" y1="468" x2="809" y2="465"/>
<line x1="809" y1="465" x2="862" y2="459"/>
<line x1="862" y1="459" x2="917" y2="451"/>
<line x1="917" y1="451" x2="972" y2="445"/>
<line x1="972" y1="445" x2="1026" y2="438"/>
<line x1="1026" y1="438" x2="1062" y2="433"/>
<line x1="287" y1="427" x2="291" y2="507"/>
<line x1="304" y1="427" x2="291" y2="507"/>
<line x1="304" y1="427" x2="346" y2="498"/>
<line x1="358" y1="427" x2="346" y2="498"/>
<line x1="358" y1="427" x2="400" y2="490"/>
<line x1="400" y1="490" x2="415" y2="427"/>
<line x1="415" y1="427" x2="454" y2="482"/>
<line x1="454" y1="482" x2="469" y2="427"/>
<line x1="469" y1="427" x2="509" y2="475"/>
<line x1="509" y1="475" x2="524" y2="427"/>
<line x1="524" y1="427" x2="561" y2="468"/>
<line x1="561" y1="468" x2="579" y2="427"/>
<line x1="579" y1="427" x2="616" y2="468"/>
<line x1="616" y1="468" x2="634" y2="427"/>
<line x1="634" y1="427" x2="671" y2="468"/>
<line x1="671" y1="468" x2="688" y2="427"/>
<line x1="688" y1="427" x2="726" y2="468"/>
<line x1="726" y1="468" x2="743" y2="427"/>
<line x1="743" y1="427" x2="794" y2="468"/>
<line x1="794" y1="468" x2="800" y2="427"/>
<line x1="800" y1="427" x2="809" y2="465"/>
<line x1="800" y1="427" x2="862" y2="459"/>
<line x1="800" y1="375" x2="862" y2="459"/>
<line x1="800" y1="375" x2="917" y2="451"/>
<line x1="800" y1="319" x2="917" y2="451"/>
<line x1="800" y1="319" x2="972" y2="445"/>
<line x1="291" y1="507" x2="286" y2="555"/>
<line x1="291" y1="507" x2="302" y2="555"/>
<line x1="346" y1="498" x2="343" y2="555"/>
<line x1="346" y1="498" x2="359" y2="555"/>
<line x1="400" y1="490" x2="400" y2="555"/>
<line x1="400" y1="490" x2="419" y2="555"/>
<line x1="454" y1="482" x2="458" y2="555"/>
<line x1="509" y1="475" x2="496" y2="555"/>
<line x1="509" y1="475" x2="519" y2="555"/>
<line x1="561" y1="468" x2="553" y2="555"/>
<line x1="561" y1="468" x2="577" y2="555"/>
<line x1="616" y1="468" x2="614" y2="555"/>
<line x1="616" y1="468" x2="637" y2="555"/>
<line x1="671" y1="468" x2="673" y2="555"/>
<line x1="726" y1="468" x2="710" y2="555"/>
<line x1="726" y1="468" x2="732" y2="555"/>
<line x1="794" y1="468" x2="778" y2="555"/>
<line x1="794" y1="468" x2="802" y2="555"/>
<line x1="809" y1="465" x2="811" y2="555"/>
<line x1="809" y1="465" x2="834" y2="555"/>
<line x1="862" y1="459" x2="871" y2="555"/>
<line x1="917" y1="451" x2="904" y2="555"/>
<line x1="917" y1="451" x2="931" y2="555"/>
<line x1="972" y1="445" x2="964" y2="555"/>
<line x1="972" y1="445" x2="991" y2="555"/>
<line x1="1026" y1="438" x2="1024" y2="555"/>
<line x1="1026" y1="438" x2="1052" y2="555"/>
</g>
<g stroke="#b8a838" stroke-width="1" fill="none"><polyline points="187,164.5 239.5,164.5 239.5,487.5 187,487.5"/><rect x="287.5" y="283.5" width="513" height="144"/></g>
<line x1="519" y1="357" x2="584" y2="357" stroke="#9a1c14" stroke-width="1.5"/><line x1="551" y1="325" x2="551" y2="389" stroke="#2e7a2e" stroke-width="1.5"/>
<g stroke="#dcdcdc" stroke-width="1.15">
<path d="M412.5 265.5L417.5 270.5M417.5 265.5L412.5 270.5"/>
<path d="M428.5 265.5L433.5 270.5M433.5 265.5L428.5 270.5"/>
<path d="M371.0 281.5L376.0 286.5M376.0 281.5L371.0 286.5"/>
<path d="M374.5 285.5L379.5 290.5M379.5 285.5L374.5 290.5"/>
<path d="M412.5 281.5L417.5 286.5M417.5 281.5L412.5 286.5"/>
<path d="M414.0 285.0L419.0 290.0M419.0 285.0L414.0 290.0"/>
<path d="M428.5 281.5L433.5 286.5M433.5 281.5L428.5 286.5"/>
<path d="M429.0 285.0L434.0 290.0M434.0 285.0L429.0 290.0"/>
<path d="M455.0 284.5L460.0 289.5M460.0 284.5L455.0 289.5"/>
<path d="M458.5 284.5L463.5 289.5M463.5 284.5L458.5 289.5"/>
<path d="M539.0 284.5L544.0 289.5M544.0 284.5L539.0 289.5"/>
<path d="M542.5 284.5L547.5 289.5M547.5 284.5L542.5 289.5"/>
<path d="M374.5 294.5L379.5 299.5M379.5 294.5L374.5 299.5"/>
<path d="M371.5 300.0L376.5 305.0M376.5 300.0L371.5 305.0"/>
<path d="M375.0 300.0L380.0 305.0M380.0 300.0L375.0 305.0"/>
<path d="M371.5 314.5L376.5 319.5M376.5 314.5L371.5 319.5"/>
<path d="M375.0 314.5L380.0 319.5M380.0 314.5L375.0 319.5"/>
<path d="M371.5 326.5L376.5 331.5M376.5 326.5L371.5 331.5"/>
<path d="M375.0 326.5L380.0 331.5M380.0 326.5L375.0 331.5"/>
<path d="M371.5 339.5L376.5 344.5M376.5 339.5L371.5 344.5"/>
<path d="M375.0 339.5L380.0 344.5M380.0 339.5L375.0 344.5"/>
<path d="M371.5 350.5L376.5 355.5M376.5 350.5L371.5 355.5"/>
<path d="M375.0 350.5L380.0 355.5M380.0 350.5L375.0 355.5"/>
<path d="M371.5 355.5L376.5 360.5M376.5 355.5L371.5 360.5"/>
<path d="M375.0 355.5L380.0 360.5M380.0 355.5L375.0 360.5"/>
<path d="M371.5 360.5L376.5 365.5M376.5 360.5L371.5 365.5"/>
<path d="M375.0 360.5L380.0 365.5M380.0 360.5L375.0 365.5"/>
<path d="M371.5 374.5L376.5 379.5M376.5 374.5L371.5 379.5"/>
<path d="M375.0 374.5L380.0 379.5M380.0 374.5L375.0 379.5"/>
<path d="M374.5 412.5L379.5 417.5M379.5 412.5L374.5 417.5"/>
<path d="M371.5 423.5L376.5 428.5M376.5 423.5L371.5 428.5"/>
<path d="M375.0 423.5L380.0 428.5M380.0 423.5L375.0 428.5"/>
<path d="M374.5 419.5L379.5 424.5M379.5 419.5L374.5 424.5"/>
<path d="M404.5 308.5L409.5 313.5M409.5 308.5L404.5 313.5"/>
<path d="M421.5 308.5L426.5 313.5M426.5 308.5L421.5 313.5"/>
<path d="M404.5 325.5L409.5 330.5M409.5 325.5L404.5 330.5"/>
<path d="M421.5 325.5L426.5 330.5M426.5 325.5L421.5 330.5"/>
<path d="M412.5 423.5L417.5 428.5M417.5 423.5L412.5 428.5"/>
<path d="M412.5 426.5L417.5 431.5M417.5 426.5L412.5 431.5"/>
<path d="M428.5 423.5L433.5 428.5M433.5 423.5L428.5 428.5"/>
<path d="M428.5 426.5L433.5 431.5M433.5 426.5L428.5 431.5"/>
<path d="M640.5 240.5L645.5 245.5M645.5 240.5L640.5 245.5"/>
<path d="M690.5 240.5L695.5 245.5M695.5 240.5L690.5 245.5"/>
<path d="M638.5 271.5L643.5 276.5M643.5 271.5L638.5 276.5"/>
<path d="M693.5 271.5L698.5 276.5M698.5 271.5L693.5 276.5"/>
<path d="M716.5 265.5L721.5 270.5M721.5 265.5L716.5 270.5"/>
<path d="M732.5 265.5L737.5 270.5M737.5 265.5L732.5 270.5"/>
<path d="M622.0 284.0L627.0 289.0M627.0 284.0L622.0 289.0"/>
<path d="M625.5 285.0L630.5 290.0M630.5 285.0L625.5 290.0"/>
<path d="M639.5 282.5L644.5 287.5M644.5 282.5L639.5 287.5"/>
<path d="M639.5 285.5L644.5 290.5M644.5 285.5L639.5 290.5"/>
<path d="M691.5 283.5L696.5 288.5M696.5 283.5L691.5 288.5"/>
<path d="M691.5 286.5L696.5 291.5M696.5 286.5L691.5 291.5"/>
<path d="M706.0 285.5L711.0 290.5M711.0 285.5L706.0 290.5"/>
<path d="M709.5 285.5L714.5 290.5M714.5 285.5L709.5 290.5"/>
<path d="M717.5 283.5L722.5 288.5M722.5 283.5L717.5 288.5"/>
<path d="M717.5 287.5L722.5 292.5M722.5 287.5L717.5 292.5"/>
<path d="M733.0 284.5L738.0 289.5M738.0 284.5L733.0 289.5"/>
<path d="M736.5 286.5L741.5 291.5M741.5 286.5L736.5 291.5"/>
<path d="M739.5 286.5L744.5 291.5M744.5 286.5L739.5 291.5"/>
<path d="M788.5 285.5L793.5 290.5M793.5 285.5L788.5 290.5"/>
<path d="M792.5 290.5L797.5 295.5M797.5 290.5L792.5 295.5"/>
<path d="M455.0 423.5L460.0 428.5M460.0 423.5L455.0 428.5"/>
<path d="M458.5 423.5L463.5 428.5M463.5 423.5L458.5 428.5"/>
<path d="M539.0 423.5L544.0 428.5M544.0 423.5L539.0 428.5"/>
<path d="M542.5 423.5L547.5 428.5M547.5 423.5L542.5 428.5"/>
<path d="M623.0 423.5L628.0 428.5M628.0 423.5L623.0 428.5"/>
<path d="M626.5 423.5L631.5 428.5M631.5 423.5L626.5 428.5"/>
<path d="M706.5 423.5L711.5 428.5M711.5 423.5L706.5 428.5"/>
<path d="M710.0 423.5L715.0 428.5M715.0 423.5L710.0 428.5"/>
<path d="M716.5 424.5L721.5 429.5M721.5 424.5L716.5 429.5"/>
<path d="M733.5 423.5L738.5 428.5M738.5 423.5L733.5 428.5"/>
<path d="M737.0 423.5L742.0 428.5M742.0 423.5L737.0 428.5"/>
<path d="M790.5 418.5L795.5 423.5M795.5 418.5L790.5 423.5"/>
<path d="M793.5 414.5L798.5 419.5M798.5 414.5L793.5 419.5"/>
<path d="M716.5 441.5L721.5 446.5M721.5 441.5L716.5 446.5"/>
<path d="M732.5 441.5L737.5 446.5M737.5 441.5L732.5 446.5"/>
<path d="M412.5 441.5L417.5 446.5M417.5 441.5L412.5 446.5"/>
<path d="M428.5 441.5L433.5 446.5M433.5 441.5L428.5 446.5"/>
<path d="M793.5 350.5L798.5 355.5M798.5 350.5L793.5 355.5"/>
<path d="M793.5 355.5L798.5 360.5M798.5 355.5L793.5 360.5"/>
</g>
<g fill="none" stroke-width="1.2"><path d="M206.5 500V533" stroke="#3a9a3a"/><path d="M206.5 488L202 500H211Z" stroke="#3a9a3a"/><rect x="202" y="532.5" width="9" height="8" stroke="#d0d0d0"/><path d="M211 536.5H244" stroke="#b02a20"/><path d="M244 533L255 536.5L244 540Z" stroke="#b02a20"/></g>
<g fill="#d8d8d8" font-family="Liberation Sans" font-size="11"><text x="202" y="480">Y</text><text x="263" y="541">X</text></g>
</svg>
<div id="layouttabs" class="a"></div>
<div class="a" style="left:185px;top:555px;width:2px;height:13px;background:#7a7a7a;"></div>
<div class="a" style="left:187px;top:555.3px;width:873px;height:10.5px;background:linear-gradient(#f4f4f4,#e6e6e6);"></div>
<div class="a" style="left:187px;top:565.6px;width:873px;height:2.8px;background:#505050;"></div>
<div class="a" style="left:187.8px;top:556px;width:7.6px;height:9.5px;background:linear-gradient(#fafafa,#e0e0e0);border:1px solid #c0c0c0;"></div>
<div class="a" style="left:195.4px;top:556px;width:7.9px;height:9.5px;background:linear-gradient(#fafafa,#e0e0e0);border:1px solid #c0c0c0;"></div>
<div class="a" style="left:203.3px;top:556px;width:7.7px;height:9.5px;background:linear-gradient(#fafafa,#e0e0e0);border:1px solid #c0c0c0;"></div>
<div class="a" style="left:211px;top:556px;width:10.5px;height:9.5px;background:linear-gradient(#fafafa,#e0e0e0);border:1px solid #c0c0c0;"></div>
<svg class="a" style="left:188.5px;top:557.5px" width="7" height="7" viewBox="0 0 7 7"><path d="M1.5 1 V6 M6 1 L2.5 3.5 L6 6Z" stroke="#111" stroke-width="0.8" fill="#111"/></svg>
<svg class="a" style="left:197.5px;top:557.5px" width="7" height="7" viewBox="0 0 7 7"><path d="M5 1 L1.5 3.5 L5 6Z" fill="#111"/></svg>
<svg class="a" style="left:205.5px;top:557.5px" width="7" height="7" viewBox="0 0 7 7"><path d="M1.5 1 L5 3.5 L1.5 6Z" fill="#111"/></svg>
<svg class="a" style="left:213px;top:557.5px" width="9" height="7" viewBox="0 0 9 7"><path d="M7.5 1 V6 M3 1 L6.5 3.5 L3 6Z" stroke="#111" stroke-width="0.8" fill="#111"/></svg>
<svg class="a" style="left:223.5px;top:555.5px" width="100" height="11" viewBox="0 0 100 11"><path d="M0.5 0.5 L4.5 10 H26.5 L30 0.5 M27 0.5 L31 10 H58 L61.5 0.5 M59 0.5 L63 10 H92 L96 0.5" stroke="#333" stroke-width="0.8" fill="none"/></svg>
<div class="t" style="left:229.7px;top:557.27px;font-size:6.3px;color:#111;font-weight:bold;">Model</div>
<div class="t" style="left:258.3px;top:557.56px;font-size:5.95px;color:#333;">Layout1</div>
<div class="t" style="left:291.2px;top:557.56px;font-size:5.95px;color:#333;">Layout2</div>
<div class="a" style="left:1060px;top:555px;width:20px;height:14px;background:#5a5a5a;"></div>
<div id="rightbar" class="a"></div>
<div class="a" style="left:1060px;top:108px;width:20px;height:243px;background:linear-gradient(90deg,#c0c4cc,#dadde4 50%,#cdd0d8);border-left:1px solid #9a9ea8;"></div>
<svg class="a" style="left:1063px;top:111px" width="16" height="2" viewBox="0 0 16 2"><rect x="0" y="0" width="1" height="1" fill="#666"/><rect x="2" y="0" width="1" height="1" fill="#666"/><rect x="4" y="0" width="1" height="1" fill="#666"/><rect x="6" y="0" width="1" height="1" fill="#666"/><rect x="8" y="0" width="1" height="1" fill="#666"/><rect x="10" y="0" width="1" height="1" fill="#666"/><rect x="12" y="0" width="1" height="1" fill="#666"/><rect x="14" y="0" width="1" height="1" fill="#666"/></svg>
<svg class="a" style="left:1065px;top:113.3px" width="10" height="10" viewBox="0 0 10 10"><path d="M1 5 H10" stroke="#555" stroke-width="0.9"/><circle cx="10" cy="5" r="1.3" fill="#e03a2a"/></svg>
<svg class="a" style="left:1065px;top:124.80000000000001px" width="10" height="10" viewBox="0 0 10 10"><path d="M3 9 V5 H9" stroke="#555" stroke-width="0.9" fill="none"/><circle cx="9" cy="4" r="1.3" fill="#e03a2a"/></svg>
<svg class="a" style="left:1065px;top:138.5px" width="10" height="10" viewBox="0 0 10 10"><path d="M3 1 V9 M8 1 V9 M3 5 H8" stroke="#555" stroke-width="0.9"/><circle cx="3" cy="2" r="1.2" fill="#e03a2a"/><circle cx="5" cy="6" r="1.2" fill="#e03a2a"/><circle cx="9" cy="9" r="1.2" fill="#e03a2a"/></svg>
<svg class="a" style="left:1065px;top:151px" width="10" height="10" viewBox="0 0 10 10"><circle cx="5" cy="5" r="3.8" stroke="#555" stroke-width="1" fill="none"/><circle cx="8.5" cy="8" r="1.3" fill="#e03a2a"/></svg>
<svg class="a" style="left:1065px;top:162.4px" width="10" height="10" viewBox="0 0 10 10"><path d="M1 1 L8 8" stroke="#555" stroke-width="1"/><circle cx="8.5" cy="8.5" r="1.3" fill="#e03a2a"/></svg>
<svg class="a" style="left:1065px;top:175.3px" width="10" height="10" viewBox="0 0 10 10"><path d="M1 3 H9 M5 3 V0" stroke="#555" stroke-width="0.9"/><path d="M1 9 Q5 2 9 9" stroke="#555" stroke-width="0.9" fill="none"/><circle cx="5" cy="3" r="1.3" fill="#e03a2a"/></svg>
<svg class="a" style="left:1065px;top:187.2px" width="10" height="10" viewBox="0 0 10 10"><circle cx="5" cy="5" r="4" stroke="#555" stroke-width="1" fill="none"/><circle cx="5" cy="5" r="1.4" fill="#e03a2a"/></svg>
<svg class="a" style="left:1065px;top:201.5px" width="10" height="10" viewBox="0 0 10 10"><path d="M5 1 V8 M1 8 H9" stroke="#555" stroke-width="1"/><circle cx="5" cy="8" r="1.3" fill="#e03a2a"/></svg>
<svg class="a" style="left:1065px;top:213px" width="10" height="10" viewBox="0 0 10 10"><circle cx="5" cy="6" r="3" stroke="#555" stroke-width="1" fill="none"/><path d="M2 1 L6 5" stroke="#555" stroke-width="0.9"/><circle cx="7" cy="8" r="1.3" fill="#e03a2a"/></svg>
<svg class="a" style="left:1065px;top:224.4px" width="10" height="10" viewBox="0 0 10 10"><circle cx="5" cy="5" r="3.8" stroke="#e03a2a" stroke-width="1" fill="none"/><circle cx="1.2" cy="5" r="1.1" fill="#e03a2a"/><circle cx="8.8" cy="5" r="1.1" fill="#e03a2a"/></svg>
<svg class="a" style="left:1065px;top:236.8px" width="10" height="10" viewBox="0 0 10 10"><rect x="1" y="2" width="7" height="6" fill="#fff" stroke="#555" stroke-width="0.8"/><circle cx="7" cy="7" r="2.5" fill="#fff" stroke="#2a6ac8" stroke-width="0.8"/></svg>
<svg class="a" style="left:1065px;top:249.2px" width="10" height="10" viewBox="0 0 10 10"><circle cx="5" cy="5" r="1.2" fill="#e03a2a"/></svg>
<svg class="a" style="left:1065px;top:261.9px" width="10" height="10" viewBox="0 0 10 10"><path d="M1 9 L9 1" stroke="#555" stroke-width="0.9"/><circle cx="5" cy="5" r="1.3" fill="#e03a2a"/></svg>
<svg class="a" style="left:1065px;top:274.6px" width="10" height="10" viewBox="0 0 10 10"><path d="M1 7 L7 1 M3 9 L9 3" stroke="#555" stroke-width="0.9"/><circle cx="5" cy="5" r="1.1" fill="#e03a2a"/></svg>
<svg class="a" style="left:1065px;top:291.4px" width="10" height="10" viewBox="0 0 10 10"><path d="M1 1 L9 9 M9 1 L1 9" stroke="#555" stroke-width="0.9"/><circle cx="5" cy="5" r="1.2" fill="#e03a2a"/></svg>
<svg class="a" style="left:1065px;top:303.7px" width="10" height="10" viewBox="0 0 10 10"><path d="M1 1 L5 6 L9 1 M1 9 L9 9" stroke="#555" stroke-width="0.9" fill="none"/><circle cx="5" cy="6" r="1.2" fill="#e03a2a"/></svg>
<svg class="a" style="left:1065px;top:320.5px" width="10" height="10" viewBox="0 0 10 10"><circle cx="6" cy="2" r="1.3" fill="#333"/><path d="M5 3 L4 6 L1 6 M4 6 L6 9 M5 4 L8 5 M4 6 L3 9" stroke="#333" stroke-width="1" fill="none"/></svg>
<div class="a" style="left:1064px;top:287px;width:12px;height:1px;background:#999;"></div>
<div class="a" style="left:1064px;top:317px;width:12px;height:1px;background:#999;"></div>
<div class="a" style="left:1064px;top:331px;width:13px;height:13px;background:linear-gradient(#fce0a0,#f8b850);border:1px solid #e0a040;border-radius:1px;"></div>
<svg class="a" style="left:1066px;top:333px" width="9" height="9" viewBox="0 0 9 9"><path d="M1 1 L8 8 M8 1 L1 8" stroke="#e83a1a" stroke-width="2"/></svg>
<div class="a" style="left:993px;top:119px;width:63px;height:113px;background:#f3f3f3;border:1px solid #c8c8c8;"></div>
<div class="t" style="left:998px;top:124.44px;font-size:6.8px;color:#b4b4b4;">Hot Toggles!</div>
<div class="a" style="left:1044px;top:123.5px;width:10px;height:10px;background:#dcdcdc;border:1px solid #d0d0d0;"></div>
<div class="a" style="left:995.5px;top:138.39999999999998px;width:6.5px;height:6.5px;background:#fff;border:1px solid #777;"></div>
<svg class="a" style="left:995.5px;top:138.39999999999998px" width="7" height="7" viewBox="0 0 7 7"><path d="M1 3.5 L3 5.5 L6.5 1" stroke="#333" stroke-width="0.9" fill="none"/></svg>
<div class="t" style="left:1004px;top:138.74px;font-size:6.1px;color:#2a2a2a;">Point Protection</div>
<div class="a" style="left:995.5px;top:146.64999999999998px;width:6.5px;height:6.5px;background:#fff;border:1px solid #777;"></div>
<svg class="a" style="left:995.5px;top:146.64999999999998px" width="7" height="7" viewBox="0 0 7 7"><path d="M1 3.5 L3 5.5 L6.5 1" stroke="#333" stroke-width="0.9" fill="none"/></svg>
<div class="t" style="left:1004px;top:146.99px;font-size:6.1px;color:#2a2a2a;">Log File Output</div>
<div class="a" style="left:995.5px;top:154.89999999999998px;width:6.5px;height:6.5px;background:#fff;border:1px solid #777;"></div>
<div class="t" style="left:1004px;top:155.24px;font-size:6.1px;color:#2a2a2a;">Input scale</div>
<div class="a" style="left:995.5px;top:163.14999999999998px;width:6.5px;height:6.5px;background:#fff;border:1px solid #777;"></div>
<div class="t" style="left:1004px;top:163.49px;font-size:6.1px;color:#2a2a2a;">Output scale</div>
<div class="a" style="left:995.5px;top:171.39999999999998px;width:6.5px;height:6.5px;background:#fff;border:1px solid #777;"></div>
<svg class="a" style="left:995.5px;top:171.39999999999998px" width="7" height="7" viewBox="0 0 7 7"><path d="M1 3.5 L3 5.5 L6.5 1" stroke="#333" stroke-width="0.9" fill="none"/></svg>
<div class="t" style="left:1004px;top:171.74px;font-size:6.1px;color:#2a2a2a;">Draw lines/curves</div>
<div class="a" style="left:995.5px;top:179.64999999999998px;width:6.5px;height:6.5px;background:#fff;border:1px solid #777;"></div>
<svg class="a" style="left:995.5px;top:179.64999999999998px" width="7" height="7" viewBox="0 0 7 7"><path d="M1 3.5 L3 5.5 L6.5 1" stroke="#333" stroke-width="0.9" fill="none"/></svg>
<div class="t" style="left:1004px;top:179.99px;font-size:6.1px;color:#2a2a2a;">Draw distances</div>
<div class="a" style="left:995.5px;top:187.89999999999998px;width:6.5px;height:6.5px;background:#fff;border:1px solid #777;"></div>
<svg class="a" style="left:995.5px;top:187.89999999999998px" width="7" height="7" viewBox="0 0 7 7"><path d="M1 3.5 L3 5.5 L6.5 1" stroke="#333" stroke-width="0.9" fill="none"/></svg>
<div class="t" style="left:1004px;top:188.24px;font-size:6.1px;color:#2a2a2a;">Draw bearings</div>
<div class="t" style="left:996.5px;top:199.22px;font-size:6px;color:#333;">Next pt:</div>
<div class="a" style="left:1019.5px;top:197px;width:34px;height:9.5px;background:#fff;border:1px solid #a8a8a8;"></div>
<div class="t" style="left:1022px;top:199.22px;font-size:6px;color:#222;">1</div>
<div class="t" style="left:998.5px;top:211.12px;font-size:6px;color:#333;">Low pt:</div>
<div class="a" style="left:1019.5px;top:209.5px;width:34px;height:10px;background:#ececec;border:1px solid #c0c0c0;"></div>
<div class="t" style="left:1022px;top:211.42px;font-size:6px;color:#444;">1</div>
<div class="a" style="left:1002px;top:221.7px;width:44px;height:8.2px;background:linear-gradient(#f0f0f0,#dcdcdc);border:1px solid #b8b8b8;"></div>
<div class="t" style="left:1024px;top:222.87px;font-size:6.3px;transform:translateX(-50%);color:#333;">Refresh</div>
<div id="cmd" class="a"></div>
<div class="a" style="left:0px;top:568.5px;width:1080px;height:72.5px;background:#fff;"></div>
<div class="a" style="left:0px;top:568.5px;width:12.5px;height:72.5px;background:linear-gradient(90deg,#b8b8b8,#d4d4d4);"></div>
<div class="t" style="left:2.5px;top:571.70px;font-size:6.5px;color:#333;">&#x2715;</div>
<svg class="a" style="left:2.5px;top:583.5px" width="6" height="4" viewBox="0 0 6 4"><path d="M0 0 H6 L3 3.5Z" fill="#222"/></svg>
<div class="a" style="left:12.5px;top:568.5px;width:1px;height:72px;background:#a8a8a8;"></div>
<div class="t" style="left:13px;top:570.36px;font-size:8.2px;color:#333;font-family:'Liberation Mono',monospace;letter-spacing:-0.48px;-webkit-text-stroke:0;">Command:</div>
<div class="t" style="left:13px;top:578.08px;font-size:8.2px;color:#333;font-family:'Liberation Mono',monospace;letter-spacing:-0.48px;-webkit-text-stroke:0;">Command: SELECTSIMILAR</div>
<div class="t" style="left:13px;top:585.80px;font-size:8.2px;color:#333;font-family:'Liberation Mono',monospace;letter-spacing:-0.48px;-webkit-text-stroke:0;">Command: _.SELECT</div>
<div class="t" style="left:13px;top:593.52px;font-size:8.2px;color:#333;font-family:'Liberation Mono',monospace;letter-spacing:-0.48px;-webkit-text-stroke:0;">[FILter]/&lt;Select entities&gt;:</div>
<div class="t" style="left:13px;top:601.24px;font-size:8.2px;color:#333;font-family:'Liberation Mono',monospace;letter-spacing:-0.48px;-webkit-text-stroke:0;">Command:</div>
<div class="t" style="left:13px;top:608.96px;font-size:8.2px;color:#333;font-family:'Liberation Mono',monospace;letter-spacing:-0.48px;-webkit-text-stroke:0;">Command:</div>
<div class="t" style="left:13px;top:616.68px;font-size:8.2px;color:#333;font-family:'Liberation Mono',monospace;letter-spacing:-0.48px;-webkit-text-stroke:0;">Cancel</div>
<div class="a" style="left:12.5px;top:628.8px;width:1057px;height:1px;background:#c8c8c8;"></div>
<div class="t" style="left:13.2px;top:631.07px;font-size:7px;color:#222;font-family:'Liberation Mono',monospace;letter-spacing:-0.3px;">Command:</div>
<div class="a" style="left:1069.5px;top:569px;width:10px;height:60px;background:#f0f0f0;border-left:1px solid #e0e0e0;"></div>
<svg class="a" style="left:1071px;top:572px" width="7" height="6" viewBox="0 0 7 6"><path d="M1 4 L3.5 1.5 L6 4" stroke="#333" stroke-width="0.9" fill="none"/></svg>
<svg class="a" style="left:1071px;top:621px" width="7" height="6" viewBox="0 0 7 6"><path d="M1 1.5 L3.5 4 L6 1.5" stroke="#333" stroke-width="0.9" fill="none"/></svg>
<div class="a" style="left:1070.5px;top:610px;width:8px;height:8px;background:#c8c8c8;"></div>
<div class="a" style="left:1079px;top:568.5px;width:1px;height:73px;background:#888;"></div>
<div id="status" class="a"></div>
<div class="a" style="left:0px;top:641px;width:1080px;height:16px;background:linear-gradient(#3a3a3a,#2c2c2c);"></div>
<div class="a" style="left:0px;top:641px;width:1080px;height:1px;background:#1e1e1e;"></div>
<div class="a" style="left:587.5px;top:643px;width:1px;height:12px;background:#4a4a4a;"></div>
<div class="a" style="left:685px;top:643px;width:1px;height:12px;background:#4a4a4a;"></div>
<div class="a" style="left:703.5px;top:643px;width:1px;height:12px;background:#4a4a4a;"></div>
<div class="a" style="left:721px;top:643px;width:1px;height:12px;background:#4a4a4a;"></div>
<div class="a" style="left:737.5px;top:643px;width:1px;height:12px;background:#4a4a4a;"></div>
<div class="a" style="left:759.5px;top:643px;width:1px;height:12px;background:#4a4a4a;"></div>
<div class="a" style="left:775.5px;top:643px;width:1px;height:12px;background:#4a4a4a;"></div>
<div class="a" style="left:792px;top:643px;width:1px;height:12px;background:#4a4a4a;"></div>
<div class="a" style="left:808px;top:643px;width:1px;height:12px;background:#4a4a4a;"></div>
<div class="a" style="left:825px;top:643px;width:1px;height:12px;background:#4a4a4a;"></div>
<div class="a" style="left:843px;top:643px;width:1px;height:12px;background:#4a4a4a;"></div>
<div class="a" style="left:860px;top:643px;width:1px;height:12px;background:#4a4a4a;"></div>
<div class="a" style="left:876.5px;top:643px;width:1px;height:12px;background:#4a4a4a;"></div>
<div class="a" style="left:893px;top:643px;width:1px;height:12px;background:#4a4a4a;"></div>
<div class="a" style="left:909.5px;top:643px;width:1px;height:12px;background:#4a4a4a;"></div>
<div class="a" style="left:926.5px;top:643px;width:1px;height:12px;background:#4a4a4a;"></div>
<div class="a" style="left:953px;top:643px;width:1px;height:12px;background:#4a4a4a;"></div>
<div class="a" style="left:972px;top:643px;width:1px;height:12px;background:#4a4a4a;"></div>
<div class="a" style="left:994px;top:643px;width:1px;height:12px;background:#4a4a4a;"></div>
<div class="a" style="left:1009px;top:643px;width:1px;height:12px;background:#4a4a4a;"></div>
<div class="a" style="left:1026px;top:643px;width:1px;height:12px;background:#4a4a4a;"></div>
<div class="a" style="left:1042px;top:643px;width:1px;height:12px;background:#4a4a4a;"></div>
<div class="a" style="left:1059px;top:643px;width:1px;height:12px;background:#4a4a4a;"></div>
<div class="t" style="left:595.6px;top:647.58px;font-size:6.05px;color:#d8d8d8;">39680.415,63819.194,0.000</div>
<div class="a" style="left:690px;top:643px;width:11px;height:12px;background:linear-gradient(#f0f0f0,#c8c8c8);border:1px solid #888;"></div>
<svg class="a" style="left:690px;top:643px" width="11" height="12" viewBox="0 0 11 12"><path d="M1 10 L10 1" stroke="#e03a2a" stroke-width="1.4"/><path d="M6 10 L10 6" stroke="#2aa0d8" stroke-width="1.2"/></svg>
<svg class="a" style="left:707px;top:644px" width="12" height="10" viewBox="0 0 12 10"><path d="M1 5 H11 M6 2 V8" stroke="#c82a2a" stroke-width="1.2"/></svg>
<svg class="a" style="left:724px;top:644px" width="12" height="11" viewBox="0 0 12 11"><path d="M6 1 V6 L1 10 M6 6 L11 10" stroke="#e8e8e8" stroke-width="1.6" fill="none"/></svg>
<div class="t" style="left:738.9px;top:647.59px;font-size:5.8px;color:#d8d8d8;">1:1000</div>
<div class="a" style="left:761px;top:642.5px;width:12.5px;height:13px;background:linear-gradient(#e0e0e0,#a8a8a8);border:1px solid #777;"></div>
<svg class="a" style="left:761px;top:643px" width="12" height="11" viewBox="0 0 12 11"><path d="M6 1 V6 L1 10 M6 6 L11 10" stroke="#fff" stroke-width="1.4" fill="none"/><circle cx="9" cy="9" r="2" fill="#f0d020"/></svg>
<svg class="a" style="left:777px;top:644px" width="12" height="11" viewBox="0 0 12 11"><path d="M6 1 V6 L1 10 M6 6 L11 10" stroke="#e8e8e8" stroke-width="1.6" fill="none"/><circle cx="10" cy="2" r="1.5" fill="#f0d020"/></svg>
<svg class="a" style="left:795px;top:644px" width="12" height="12" viewBox="0 0 12 12"><rect x="1" y="1" width="1.2" height="1.2" fill="#e0e0e0"/><rect x="1" y="4" width="1.2" height="1.2" fill="#e0e0e0"/><rect x="1" y="7" width="1.2" height="1.2" fill="#e0e0e0"/><rect x="1" y="10" width="1.2" height="1.2" fill="#e0e0e0"/><rect x="4" y="1" width="1.2" height="1.2" fill="#e0e0e0"/><rect x="4" y="4" width="1.2" height="1.2" fill="#e0e0e0"/><rect x="4" y="7" width="1.2" height="1.2" fill="#e0e0e0"/><rect x="4" y="10" width="1.2" height="1.2" fill="#e0e0e0"/><rect x="7" y="1" width="1.2" height="1.2" fill="#e0e0e0"/><rect x="7" y="4" width="1.2" height="1.2" fill="#e0e0e0"/><rect x="7" y="7" width="1.2" height="1.2" fill="#e0e0e0"/><rect x="7" y="10" width="1.2" height="1.2" fill="#e0e0e0"/><rect x="10" y="1" width="1.2" height="1.2" fill="#e0e0e0"/><rect x="10" y="4" width="1.2" height="1.2" fill="#e0e0e0"/><rect x="10" y="7" width="1.2" height="1.2" fill="#e0e0e0"/><rect x="10" y="10" width="1.2" height="1.2" fill="#e0e0e0"/></svg>
<svg class="a" style="left:811px;top:643.5px" width="12" height="12" viewBox="0 0 12 12"><path d="M1 3 H11 M1 6 H11 M1 9 H11 M3 1 V11 M6 1 V11 M9 1 V11" stroke="#e8e8e8" stroke-width="0.9"/></svg>
<svg class="a" style="left:829px;top:644px" width="12" height="11" viewBox="0 0 12 11"><path d="M3 2 V7 M1 5 H6" stroke="#fff" stroke-width="1.2"/><rect x="5" y="6.5" width="6" height="2.5" fill="#fff"/></svg>
<svg class="a" style="left:845px;top:644px" width="12" height="11" viewBox="0 0 12 11"><path d="M2 2 V10 H11" stroke="#2aa84a" stroke-width="1.2" fill="none"/><path d="M4 10 H11" stroke="#e03a2a" stroke-width="1.2"/></svg>
<svg class="a" style="left:862px;top:643.5px" width="12" height="12" viewBox="0 0 12 12"><circle cx="6" cy="6" r="4.5" stroke="#f0f0f0" stroke-width="1.3" fill="none"/><circle cx="8" cy="7" r="1.3" fill="#e03a2a"/></svg>
<svg class="a" style="left:878px;top:643.5px" width="12" height="12" viewBox="0 0 12 12"><rect x="2.5" y="2.5" width="8" height="8" stroke="#f0f0f0" stroke-width="1.2" fill="none"/><circle cx="2.5" cy="2.5" r="1.6" fill="#e03a2a"/></svg>
<svg class="a" style="left:895px;top:644px" width="12" height="12" viewBox="0 0 12 12"><path d="M1 10 H10 M1 10 L9 2" stroke="#e8e8e8" stroke-width="1" fill="none"/><path d="M5 10 A4 4 0 0 0 4 7" stroke="#e8e8e8" stroke-width="0.8" fill="none"/></svg>
<svg class="a" style="left:912.5px;top:643px" width="12" height="12" viewBox="0 0 12 12"><path d="M1 2 H11 M1 5 H8 M1 8 H11 M1 11 H8" stroke="#f0f0f0" stroke-width="1.3"/></svg>
<div class="t" style="left:928.5px;top:647.34px;font-size:6.1px;color:#e0e0e0;font-weight:bold;letter-spacing:-0.2px;">MODEL</div>
<div class="t" style="left:954.5px;top:647.67px;font-size:5.7px;color:#6a6a6a;font-weight:bold;letter-spacing:-0.3px;">TABLET</div>
<svg class="a" style="left:977.5px;top:643px" width="12" height="12" viewBox="0 0 12 12"><circle cx="6" cy="6" r="3.6" fill="none" stroke="#1e6ad8" stroke-width="3.2" stroke-dasharray="1.8 1"/><circle cx="6" cy="6" r="3" fill="#1e6ad8"/><circle cx="6" cy="6" r="1.2" fill="#2c2c2c"/></svg>
<svg class="a" style="left:995px;top:643px" width="12" height="12" viewBox="0 0 12 12"><circle cx="6" cy="3" r="2" stroke="#ddd" stroke-width="1" fill="none"/><path d="M3 11 V7 H9 V11 M6 7 V10" stroke="#ddd" stroke-width="1.2" fill="none"/></svg>
<svg class="a" style="left:1011.5px;top:643px" width="12" height="12" viewBox="0 0 12 12"><rect x="1" y="2" width="10" height="8" fill="#e8eef8" stroke="#aab" stroke-width="0.6"/><rect x="1" y="6" width="10" height="4" fill="#1e5ab0"/><rect x="2" y="3" width="4" height="3" fill="#4a8ad8"/></svg>
<svg class="a" style="left:1028px;top:643px" width="12.5" height="12" viewBox="0 0 12.5 12"><rect x="0.5" y="1" width="7" height="5" fill="#1e5ab0" stroke="#ccc" stroke-width="0.5"/><rect x="4" y="5" width="8" height="6" fill="#fff" stroke="#1e5ab0" stroke-width="0.8"/></svg>
<div class="a" style="left:1044px;top:642px;width:14px;height:14px;background:linear-gradient(#d0d0d0,#888);border:1px solid #aaa;"></div>
<svg class="a" style="left:1045px;top:643px" width="12" height="12" viewBox="0 0 12 12"><circle cx="6" cy="6" r="4.5" fill="#e8eef4" stroke="#333" stroke-width="0.8"/><path d="M4 8 L8 4" stroke="#2a6ac8" stroke-width="1"/></svg>
<svg class="a" style="left:1061.5px;top:643px" width="12" height="12" viewBox="0 0 12 12"><circle cx="6" cy="6" r="5" fill="#3aaa3a"/><path d="M3 6 L5.3 8.2 L9 4" stroke="#fff" stroke-width="1.4" fill="none"/></svg>
</body></html>
